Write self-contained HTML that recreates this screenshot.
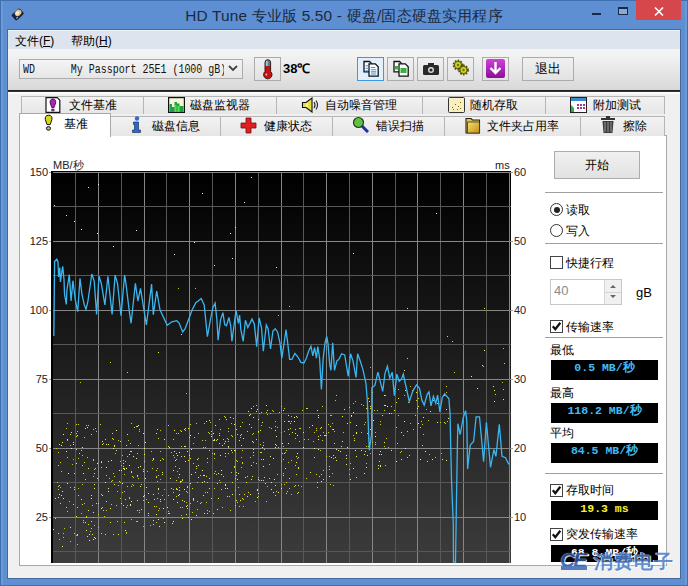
<!DOCTYPE html>
<html><head><meta charset="utf-8">
<style>
*{box-sizing:border-box;margin:0;padding:0}
html,body{width:688px;height:586px;overflow:hidden}
body{position:relative;background:#5b8dd0;font-family:"Liberation Sans",sans-serif;font-size:12px;color:#000}
.a{position:absolute}
#frame{left:0;top:0;width:688px;height:586px;border:1px solid #3f6fae;background:#5d8fd2}
#title{left:0;top:6px;width:688px;text-align:center;font-size:15.4px;letter-spacing:0.18px;color:#1b2a3e;line-height:20px;padding-left:0}
#client{left:8px;top:30px;width:672px;height:548px;background:#f0f0f0}
#menu{left:8px;top:30px;width:672px;height:19px;background:#dde4ed;border-top:1px solid #eef5fc}
#menu span{position:absolute;top:3px;font-size:12px;line-height:14px}
#toolbar{left:8px;top:49px;width:672px;height:41px;background:linear-gradient(#f4f4f5,#eeeeee 30%,#d8d8d8)}
#tbline{left:8px;top:90px;width:672px;height:2px;background:linear-gradient(#1a1a1a,#3a3a3a)}
.btn{position:absolute;border:1px solid #acacac;background:linear-gradient(#f0f0f0,#e2e2e2)}
.tab{position:absolute;border:1px solid #b5b5b5;border-bottom:none;background:linear-gradient(#f2f2f2,#e6e6e6);font-size:12px;line-height:16px}
.tab .t{position:absolute;top:1px}
#panel{left:19px;top:135px;width:648px;height:431px;background:#fff;border:1px solid #a8a8a8}
.lbl{position:absolute;font-size:12px;line-height:14px}
.ax{position:absolute;font-size:11px;line-height:12px;color:#222}
.sep{position:absolute;height:1px;background:#a0a0a0}
.val{position:absolute;left:551px;width:107px;height:20px;background:#000;font-family:"Liberation Mono",monospace;font-weight:bold;font-size:11.5px;line-height:15px;text-align:center;color:#40bcf6}
.cb{position:absolute;left:550px;width:13px;height:13px;border:1px solid #444;background:#fff}
</style></head><body>
<div id="frame" class="a"></div>
<div id="title" class="a">HD Tune 专业版 5.50 - 硬盘/固态硬盘实用程序</div>
<div class="a" style="left:1px;top:1px;width:2px;height:584px;background:#6a9ad8"></div>
<div class="a" style="left:685px;top:1px;width:2px;height:584px;background:#6a9ad8"></div>
<div class="a" style="left:7px;top:29px;width:674px;height:550px;background:#46699a"></div>
<div id="client" class="a"></div>
<div id="menu" class="a"><span style="left:7px">文件(<u>F</u>)</span><span style="left:63px">帮助(<u>H</u>)</span></div>
<div id="toolbar" class="a"></div>
<div id="tbline" class="a"></div>
<div class="a" style="left:8px;top:92px;width:672px;height:2px;background:#fbfbfb"></div>

<div id="panel" class="a"></div>
<!-- tabs row 1 -->
<div class="tab" style="left:21px;top:96px;width:123px;height:18px"></div>
<div class="tab" style="left:143px;top:96px;width:134px;height:18px"></div>
<div class="tab" style="left:276px;top:96px;width:147px;height:18px"></div>
<div class="tab" style="left:422px;top:96px;width:124px;height:18px"></div>
<div class="tab" style="left:545px;top:96px;width:120px;height:18px"></div>
<!-- tabs row 2 -->
<div class="tab" style="left:110px;top:116px;width:111px;height:20px"></div>
<div class="tab" style="left:220px;top:116px;width:113px;height:20px"></div>
<div class="tab" style="left:332px;top:116px;width:113px;height:20px"></div>
<div class="tab" style="left:444px;top:116px;width:137px;height:20px"></div>
<div class="tab" style="left:580px;top:116px;width:85px;height:20px"></div>
<div class="a" style="left:19px;top:113px;width:92px;height:24px;background:#fff;border:1px solid #a8a8a8;border-bottom:none"></div>
<!-- tab labels row1 -->
<div class="lbl" style="left:69px;top:98px">文件基准</div>
<div class="lbl" style="left:190px;top:98px">磁盘监视器</div>
<div class="lbl" style="left:325px;top:98px">自动噪音管理</div>
<div class="lbl" style="left:470px;top:98px">随机存取</div>
<div class="lbl" style="left:593px;top:98px">附加测试</div>
<div class="lbl" style="left:64px;top:117px">基准</div>
<div class="lbl" style="left:152px;top:119px">磁盘信息</div>
<div class="lbl" style="left:264px;top:119px">健康状态</div>
<div class="lbl" style="left:376px;top:119px">错误扫描</div>
<div class="lbl" style="left:487px;top:119px">文件夹占用率</div>
<div class="lbl" style="left:623px;top:119px">擦除</div>
<!-- tab icons -->
<svg class="a" style="left:45px;top:97px" width="16" height="16" viewBox="0 0 16 16"><path d="M1 0.6h11.2l2.6 2.6v12.2H1z" fill="#fff" stroke="#111" stroke-width="1.2"/><path d="M7.9 2C10.4 2 11 4 10.6 6L9 10.6H6.8L5.2 6C4.8 4 5.4 2 7.9 2z" fill="#b020c0" stroke="#301030" stroke-width="0.9"/><ellipse cx="7.9" cy="13" rx="1.5" ry="1" fill="#a030b0" stroke="#301030" stroke-width="0.7"/></svg>
<svg class="a" style="left:168px;top:97px" width="17" height="16" viewBox="0 0 17 16"><rect x="0.6" y="0.6" width="15.8" height="14.8" fill="#f4f8d8" stroke="#111" stroke-width="1.2"/><g fill="#20a040"><rect x="1.5" y="7" width="2.5" height="8"/><rect x="4" y="10" width="2.5" height="5"/><rect x="6.5" y="5" width="2.5" height="10"/><rect x="9" y="6.5" width="2.5" height="8.5"/><rect x="11.5" y="9" width="4" height="6"/></g><g fill="#50e050"><rect x="7" y="8" width="1.5" height="7"/><rect x="9.5" y="9" width="1.5" height="6"/></g></svg>
<svg class="a" style="left:301px;top:97px" width="19" height="16" viewBox="0 0 19 16"><path d="M1.5 5.5h3.5l6-4.5v14l-6-4.5H1.5z" fill="#e8e040" stroke="#111" stroke-width="1.1"/><path d="M6 6v4" stroke="#fff" stroke-width="1"/><path d="M13 5q2 3 0 6M15 3.5q3 4.5 0 9" stroke="#222" stroke-width="1.1" fill="none"/></svg>
<svg class="a" style="left:448px;top:97px" width="17" height="16" viewBox="0 0 17 16"><rect x="0.5" y="0.5" width="16" height="15" rx="1" fill="#f8eec0" stroke="#333"/><g fill="#806020"><rect x="4" y="10" width="1" height="1"/><rect x="7" y="7" width="1" height="1"/><rect x="10" y="9" width="1" height="1"/><rect x="12" y="5" width="1" height="1"/><rect x="5" y="12" width="1" height="1"/><rect x="9" y="12" width="1" height="1"/><rect x="12" y="11" width="1" height="1"/></g></svg>
<svg class="a" style="left:570px;top:97px" width="17" height="16" viewBox="0 0 17 16"><rect x="0.5" y="0.5" width="16" height="15" fill="#fff" stroke="#222"/><rect x="1" y="1" width="15" height="3" fill="#3a8ad0"/><path d="M1 15V8l3 3v4z" fill="#2ab040"/><g fill="#b03090"><rect x="7" y="7" width="2" height="2"/><rect x="10" y="7" width="2" height="2"/><rect x="7" y="10" width="2" height="2"/><rect x="10" y="10" width="2" height="2"/><rect x="13" y="10" width="2" height="2"/><rect x="13" y="7" width="2" height="2"/></g></svg>
<svg class="a" style="left:43px;top:114px" width="11" height="17" viewBox="0 0 11 17"><path d="M5.6 1.2C8.4 1.2 9.3 3.2 8.9 5.4L7.2 10.6H4L2.3 5.4C1.9 3.2 2.8 1.2 5.6 1.2z" fill="#d8d818" stroke="#111" stroke-width="1"/><ellipse cx="5.5" cy="14.4" rx="2.1" ry="1.8" fill="#b8c070" stroke="#111" stroke-width="1"/></svg>
<svg class="a" style="left:131px;top:116px" width="11" height="17" viewBox="0 0 11 17"><circle cx="6" cy="2.5" r="2.2" fill="#2a6ad8"/><path d="M2.5 6h5v8h2v2.5h-8V14h2v-5.5h-1z" fill="#2a6ad8" stroke="#123" stroke-width="0.6"/></svg>
<svg class="a" style="left:240px;top:117px" width="17" height="17" viewBox="0 0 17 17"><path d="M6 1h5v5h5v5h-5v5H6v-5H1V6h5z" fill="#e02020" stroke="#701010" stroke-width="0.8"/></svg>
<svg class="a" style="left:352px;top:116px" width="17" height="17" viewBox="0 0 17 17"><circle cx="6.5" cy="6.5" r="5" fill="#60c040" stroke="#204010" stroke-width="1.2"/><path d="M10 10l6 6" stroke="#2030a0" stroke-width="3"/></svg>
<svg class="a" style="left:465px;top:116px" width="16" height="18" viewBox="0 0 16 18"><defs><linearGradient id="fg" x1="0" y1="0" x2="1" y2="1"><stop offset="0" stop-color="#f8e070"/><stop offset="1" stop-color="#c09010"/></linearGradient></defs><path d="M1 2.5h5l1.5 1.5H14.5v13H1z" fill="#e0c040" stroke="#222" stroke-width="1.1"/><path d="M2.5 6h12v11h-12z" fill="url(#fg)" stroke="#333" stroke-width="0.8"/></svg>
<svg class="a" style="left:600px;top:116px" width="16" height="18" viewBox="0 0 16 18"><rect x="1" y="2" width="14" height="2" fill="#333"/><rect x="6" y="0" width="4" height="2" fill="#333"/><path d="M2.5 5h11l-1 12h-9z" fill="#3a3a3a"/><path d="M5 6v10M8 6v10M11 6v10" stroke="#999" stroke-width="1"/></svg>

<!-- title icon -->
<svg class="a" style="left:9px;top:6px" width="18" height="18" viewBox="0 0 18 18"><g transform="rotate(-42 8.7 8.4)"><rect x="3.2" y="4.6" width="11" height="7.6" rx="1.5" fill="#15243c"/><ellipse cx="10" cy="7.6" rx="3.6" ry="2.8" fill="#e8c48a"/><ellipse cx="9.4" cy="7.2" rx="1.8" ry="1.3" fill="#fff0d4"/><ellipse cx="6" cy="10.5" rx="1.2" ry="0.8" fill="#a0a8b0"/></g></svg>
<!-- min max close -->
<div class="a" style="left:592px;top:13px;width:9px;height:2px;background:#1b2a44"></div>
<div class="a" style="left:618px;top:7px;width:10px;height:8px;border:1px solid #1b2a44;border-top-width:2px;background:#8aaad4"></div>
<div class="a" style="left:636px;top:0;width:45px;height:20px;background:#d6474b"></div>
<svg class="a" style="left:654px;top:7px" width="10" height="9" viewBox="0 0 10 9"><path d="M1 0.5L9 8.5M9 0.5L1 8.5" stroke="#fff" stroke-width="1.6"/></svg>
<!-- combobox -->
<div class="a" style="left:19px;top:59px;width:224px;height:20px;border:1px solid #acacac;background:linear-gradient(#f4f4f4,#e6e6e6)"></div>
<div class="a" style="left:23px;top:63px;font-family:'Liberation Mono',monospace;font-size:12px;line-height:14px;white-space:pre;color:#111;transform:scaleX(0.83);transform-origin:0 0">WD      My Passport 25E1 (1000 gB)</div>
<div class="a" style="left:224px;top:60px;width:18px;height:18px;background:linear-gradient(#f4f4f4,#e6e6e6)"></div>
<svg class="a" style="left:228px;top:65px" width="10" height="7" viewBox="0 0 10 7"><path d="M1 1L5 5L9 1" stroke="#444" stroke-width="1.8" fill="none"/></svg>
<!-- thermometer button -->
<div class="btn" style="left:254px;top:57px;width:27px;height:24px"></div>
<svg class="a" style="left:260px;top:58px" width="14" height="22" viewBox="0 0 14 22"><path d="M5 4.5a2.8 2.8 0 0 1 5.6 0V13.5a4.2 4.2 0 1 1-5.6 0z" fill="#c81010" stroke="#201010" stroke-width="0.9"/><path d="M5.5 4.5a2.3 2.3 0 0 1 4.6 0V8H5.5z" fill="#3a8a98"/><rect x="6.3" y="3" width="1.2" height="5" fill="#b8f0f0"/><ellipse cx="6.3" cy="16.5" rx="1" ry="0.9" fill="#ffb0b0"/></svg>
<div class="a" style="left:283px;top:62px;font-weight:bold;font-size:13px;line-height:14px">38℃</div>
<!-- toolbar icon buttons -->
<div class="btn" style="left:357px;top:57px;width:27px;height:24px;border-color:#3c9ae4;background:#e2f0fb"></div>
<div class="btn" style="left:387px;top:57px;width:27px;height:24px"></div>
<div class="btn" style="left:417px;top:57px;width:27px;height:24px"></div>
<div class="btn" style="left:447px;top:57px;width:27px;height:24px"></div>
<div class="btn" style="left:482px;top:57px;width:27px;height:24px"></div>
<div class="btn" style="left:522px;top:57px;width:52px;height:24px"></div>
<div class="a" style="left:522px;top:62px;width:52px;text-align:center;font-size:13px;line-height:14px">退出</div>
<svg class="a" style="left:360px;top:58px" width="22" height="22" viewBox="0 0 22 22"><path d="M4 3.5h5.5l2.3 2.3v8h-7.8z" fill="#fff" stroke="#111" stroke-width="1.3"/><path d="M9 5.8h6.3l2.9 2.9v9.4h-9.2z" fill="#fff" stroke="#111" stroke-width="1.3"/><path d="M5.5 7.8h3.5M5.5 10.3h3.5M5.5 12.8h2.5M10.8 9.5h4.5M10.8 11.7h5.5M10.8 13.9h5.5M10.8 16h5.5" stroke="#3b8fe0" stroke-width="1.1"/></svg>
<svg class="a" style="left:390px;top:58px" width="22" height="22" viewBox="0 0 22 22"><path d="M4 3.5h5.5l2.3 2.3v8h-7.8z" fill="#fff" stroke="#111" stroke-width="1.3"/><path d="M9 5.8h6.3l2.9 2.9v9.4h-9.2z" fill="#fff" stroke="#111" stroke-width="1.3"/><rect x="5" y="8" width="3.5" height="3.5" fill="#3cb03c"/><rect x="10.5" y="10" width="6" height="5" fill="#3cb03c"/></svg>
<svg class="a" style="left:422px;top:62px" width="18" height="14" viewBox="0 0 18 14"><rect x="1" y="3" width="16" height="10" rx="1.5" fill="#2a2a2a"/><rect x="6" y="1" width="6" height="3" fill="#2a2a2a"/><circle cx="9" cy="8" r="3" fill="#ddd"/><circle cx="9" cy="8" r="1.6" fill="#2a2a2a"/></svg>
<svg class="a" style="left:451px;top:59px" width="20" height="17" viewBox="0 0 20 17"><g fill="#d0d020" stroke="#505010" stroke-width="0.9"><circle cx="7" cy="6" r="4.2" stroke-dasharray="1.6 1.1" stroke-width="2.4"/><circle cx="7" cy="6" r="3.6"/><circle cx="12.5" cy="11" r="4.2" stroke-dasharray="1.6 1.1" stroke-width="2.4"/><circle cx="12.5" cy="11" r="3.6"/></g><circle cx="7" cy="6" r="1.2" fill="#707010"/><circle cx="12.5" cy="11" r="1.2" fill="#707010"/></svg>
<svg class="a" style="left:486px;top:59px" width="19" height="19" viewBox="0 0 19 19"><defs><linearGradient id="pg" x1="0" y1="0" x2="0" y2="1"><stop offset="0" stop-color="#d040d8"/><stop offset="1" stop-color="#8a1098"/></linearGradient></defs><rect x="0" y="0" width="19" height="19" rx="2" fill="url(#pg)"/><path d="M9.5 3v10M4.5 9l5 5 5-5" stroke="#fff" stroke-width="2.4" fill="none"/></svg>
<svg width="460" height="392" viewBox="0 0 460 392" style="position:absolute;left:51px;top:171px;display:block">
<defs><linearGradient id="gbg" x1="0" y1="0" x2="0" y2="1"><stop offset="0" stop-color="#000"/><stop offset="1" stop-color="#3c3c3c"/></linearGradient></defs>
<rect width="460" height="392" fill="url(#gbg)"/>
<g stroke-width="1" shape-rendering="crispEdges"><line x1="1.50" y1="0" x2="1.50" y2="392" stroke="#868686"/><line x1="24.50" y1="0" x2="24.50" y2="392" stroke="#585858"/><line x1="47.50" y1="0" x2="47.50" y2="392" stroke="#868686"/><line x1="70.50" y1="0" x2="70.50" y2="392" stroke="#585858"/><line x1="93.50" y1="0" x2="93.50" y2="392" stroke="#868686"/><line x1="115.50" y1="0" x2="115.50" y2="392" stroke="#585858"/><line x1="138.50" y1="0" x2="138.50" y2="392" stroke="#868686"/><line x1="161.50" y1="0" x2="161.50" y2="392" stroke="#585858"/><line x1="184.50" y1="0" x2="184.50" y2="392" stroke="#868686"/><line x1="207.50" y1="0" x2="207.50" y2="392" stroke="#585858"/><line x1="230.50" y1="0" x2="230.50" y2="392" stroke="#868686"/><line x1="252.50" y1="0" x2="252.50" y2="392" stroke="#585858"/><line x1="275.50" y1="0" x2="275.50" y2="392" stroke="#868686"/><line x1="298.50" y1="0" x2="298.50" y2="392" stroke="#585858"/><line x1="321.50" y1="0" x2="321.50" y2="392" stroke="#868686"/><line x1="344.50" y1="0" x2="344.50" y2="392" stroke="#585858"/><line x1="366.50" y1="0" x2="366.50" y2="392" stroke="#868686"/><line x1="389.50" y1="0" x2="389.50" y2="392" stroke="#585858"/><line x1="412.50" y1="0" x2="412.50" y2="392" stroke="#868686"/><line x1="435.50" y1="0" x2="435.50" y2="392" stroke="#585858"/><line x1="458.50" y1="0" x2="458.50" y2="392" stroke="#868686"/><line x1="0" y1="1.50" x2="460" y2="1.50" stroke="#868686"/><line x1="0" y1="35.50" x2="460" y2="35.50" stroke="#585858"/><line x1="0" y1="70.50" x2="460" y2="70.50" stroke="#868686"/><line x1="0" y1="104.50" x2="460" y2="104.50" stroke="#585858"/><line x1="0" y1="139.50" x2="460" y2="139.50" stroke="#868686"/><line x1="0" y1="173.50" x2="460" y2="173.50" stroke="#585858"/><line x1="0" y1="208.50" x2="460" y2="208.50" stroke="#868686"/><line x1="0" y1="242.50" x2="460" y2="242.50" stroke="#585858"/><line x1="0" y1="277.50" x2="460" y2="277.50" stroke="#868686"/><line x1="0" y1="311.50" x2="460" y2="311.50" stroke="#585858"/><line x1="0" y1="346.50" x2="460" y2="346.50" stroke="#868686"/><line x1="0" y1="380.50" x2="460" y2="380.50" stroke="#585858"/></g>
<g><rect x="37" y="16" width="1" height="1" fill="#f0f0d0"/><rect x="47" y="13" width="1" height="1" fill="#f0f0d0"/><rect x="3" y="34" width="1" height="1" fill="#f0f0d0"/><rect x="15" y="44" width="1" height="1" fill="#f0f0d0"/><rect x="23" y="50" width="1" height="1" fill="#f0f0d0"/><rect x="30" y="58" width="1" height="1" fill="#f0f0d0"/><rect x="46" y="62" width="1" height="1" fill="#f0f0d0"/><rect x="62" y="75" width="1" height="1" fill="#f0f0d0"/><rect x="85" y="59" width="1" height="1" fill="#f0f0d0"/><rect x="123" y="83" width="1" height="1" fill="#f0f0d0"/><rect x="143" y="71" width="1" height="1" fill="#f0f0d0"/><rect x="151" y="22" width="1" height="1" fill="#f0f0d0"/><rect x="200" y="6" width="1" height="1" fill="#f0f0d0"/><rect x="193" y="31" width="1" height="1" fill="#f0f0d0"/><rect x="184" y="56" width="1" height="1" fill="#f0f0d0"/><rect x="179" y="62" width="1" height="1" fill="#f0f0d0"/><rect x="181" y="87" width="1" height="1" fill="#f0f0d0"/><rect x="385" y="42" width="1" height="1" fill="#f0f0d0"/><rect x="302" y="82" width="1" height="1" fill="#f0f0d0"/><rect x="153" y="304" width="1" height="1" fill="#f0f070"/><rect x="310" y="261" width="1" height="1" fill="#c8c810"/><rect x="198" y="253" width="1" height="1" fill="#f0f030"/><rect x="172" y="305" width="1" height="1" fill="#d0d000"/><rect x="266" y="239" width="1" height="1" fill="#f0f030"/><rect x="32" y="349" width="1" height="1" fill="#c8c810"/><rect x="233" y="237" width="1" height="1" fill="#d0d000"/><rect x="329" y="294" width="1" height="1" fill="#f0f030"/><rect x="207" y="248" width="1" height="1" fill="#f0f070"/><rect x="7" y="318" width="1" height="1" fill="#d0d000"/><rect x="22" y="273" width="1" height="1" fill="#f0f070"/><rect x="83" y="256" width="1" height="1" fill="#e0e010"/><rect x="156" y="291" width="1" height="1" fill="#d0d000"/><rect x="283" y="272" width="1" height="1" fill="#e0e010"/><rect x="168" y="309" width="1" height="1" fill="#d0d000"/><rect x="154" y="276" width="1" height="1" fill="#d0d000"/><rect x="334" y="294" width="1" height="1" fill="#c8c810"/><rect x="238" y="263" width="1" height="1" fill="#c8c810"/><rect x="78" y="283" width="1" height="1" fill="#f0f070"/><rect x="25" y="345" width="1" height="1" fill="#f0f030"/><rect x="135" y="335" width="1" height="1" fill="#f0f070"/><rect x="131" y="347" width="1" height="1" fill="#f0f030"/><rect x="305" y="262" width="1" height="1" fill="#f0f070"/><rect x="134" y="259" width="1" height="1" fill="#e0e010"/><rect x="212" y="309" width="1" height="1" fill="#e0e010"/><rect x="92" y="262" width="1" height="1" fill="#f0f070"/><rect x="113" y="351" width="1" height="1" fill="#f0f070"/><rect x="36" y="256" width="1" height="1" fill="#f0f070"/><rect x="267" y="246" width="1" height="1" fill="#f0f070"/><rect x="151" y="269" width="1" height="1" fill="#c8c810"/><rect x="246" y="246" width="1" height="1" fill="#c8c810"/><rect x="216" y="243" width="1" height="1" fill="#d0d000"/><rect x="142" y="272" width="1" height="1" fill="#c8c810"/><rect x="92" y="355" width="1" height="1" fill="#c8c810"/><rect x="270" y="256" width="1" height="1" fill="#f0f070"/><rect x="72" y="295" width="1" height="1" fill="#e0e010"/><rect x="26" y="260" width="1" height="1" fill="#c8c810"/><rect x="196" y="260" width="1" height="1" fill="#e0e010"/><rect x="202" y="271" width="1" height="1" fill="#f0f030"/><rect x="153" y="342" width="1" height="1" fill="#f0f030"/><rect x="163" y="302" width="1" height="1" fill="#e0e010"/><rect x="65" y="334" width="1" height="1" fill="#c8c810"/><rect x="315" y="237" width="1" height="1" fill="#f0f030"/><rect x="296" y="276" width="1" height="1" fill="#f0f030"/><rect x="37" y="254" width="1" height="1" fill="#c8c810"/><rect x="323" y="239" width="1" height="1" fill="#d0d000"/><rect x="88" y="341" width="1" height="1" fill="#c8c810"/><rect x="201" y="263" width="1" height="1" fill="#d0d000"/><rect x="60" y="333" width="1" height="1" fill="#d0d000"/><rect x="25" y="278" width="1" height="1" fill="#e0e010"/><rect x="188" y="323" width="1" height="1" fill="#e0e010"/><rect x="207" y="260" width="1" height="1" fill="#f0f070"/><rect x="92" y="300" width="1" height="1" fill="#e0e010"/><rect x="22" y="271" width="1" height="1" fill="#f0f070"/><rect x="125" y="309" width="1" height="1" fill="#e0e010"/><rect x="46" y="292" width="1" height="1" fill="#f0f070"/><rect x="299" y="308" width="1" height="1" fill="#f0f030"/><rect x="232" y="288" width="1" height="1" fill="#d0d000"/><rect x="49" y="253" width="1" height="1" fill="#e0e010"/><rect x="8" y="368" width="1" height="1" fill="#c8c810"/><rect x="235" y="322" width="1" height="1" fill="#e0e010"/><rect x="9" y="332" width="1" height="1" fill="#e0e010"/><rect x="163" y="317" width="1" height="1" fill="#d0d000"/><rect x="108" y="355" width="1" height="1" fill="#f0f070"/><rect x="27" y="317" width="1" height="1" fill="#c8c810"/><rect x="247" y="314" width="1" height="1" fill="#f0f070"/><rect x="247" y="296" width="1" height="1" fill="#f0f030"/><rect x="266" y="311" width="1" height="1" fill="#f0f070"/><rect x="230" y="317" width="1" height="1" fill="#f0f070"/><rect x="292" y="261" width="1" height="1" fill="#c8c810"/><rect x="290" y="275" width="1" height="1" fill="#f0f030"/><rect x="129" y="310" width="1" height="1" fill="#f0f070"/><rect x="205" y="240" width="1" height="1" fill="#f0f030"/><rect x="215" y="330" width="1" height="1" fill="#c8c810"/><rect x="295" y="287" width="1" height="1" fill="#f0f070"/><rect x="247" y="286" width="1" height="1" fill="#e0e010"/><rect x="149" y="332" width="1" height="1" fill="#e0e010"/><rect x="30" y="342" width="1" height="1" fill="#c8c810"/><rect x="12" y="327" width="1" height="1" fill="#f0f030"/><rect x="162" y="269" width="1" height="1" fill="#f0f030"/><rect x="235" y="279" width="1" height="1" fill="#e0e010"/><rect x="207" y="325" width="1" height="1" fill="#c8c810"/><rect x="87" y="254" width="1" height="1" fill="#f0f070"/><rect x="102" y="323" width="1" height="1" fill="#f0f070"/><rect x="69" y="270" width="1" height="1" fill="#e0e010"/><rect x="304" y="279" width="1" height="1" fill="#f0f070"/><rect x="299" y="251" width="1" height="1" fill="#e0e010"/><rect x="68" y="299" width="1" height="1" fill="#f0f070"/><rect x="270" y="310" width="1" height="1" fill="#f0f070"/><rect x="130" y="310" width="1" height="1" fill="#c8c810"/><rect x="107" y="267" width="1" height="1" fill="#e0e010"/><rect x="167" y="327" width="1" height="1" fill="#f0f030"/><rect x="285" y="289" width="1" height="1" fill="#f0f030"/><rect x="94" y="271" width="1" height="1" fill="#f0f070"/><rect x="152" y="276" width="1" height="1" fill="#c8c810"/><rect x="73" y="297" width="1" height="1" fill="#d0d000"/><rect x="210" y="281" width="1" height="1" fill="#e0e010"/><rect x="107" y="339" width="1" height="1" fill="#d0d000"/><rect x="12" y="362" width="1" height="1" fill="#d0d000"/><rect x="16" y="340" width="1" height="1" fill="#e0e010"/><rect x="192" y="267" width="1" height="1" fill="#f0f030"/><rect x="153" y="252" width="1" height="1" fill="#c8c810"/><rect x="18" y="330" width="1" height="1" fill="#c8c810"/><rect x="151" y="311" width="1" height="1" fill="#f0f070"/><rect x="220" y="311" width="1" height="1" fill="#f0f070"/><rect x="160" y="265" width="1" height="1" fill="#f0f030"/><rect x="6" y="311" width="1" height="1" fill="#d0d000"/><rect x="240" y="250" width="1" height="1" fill="#e0e010"/><rect x="93" y="290" width="1" height="1" fill="#e0e010"/><rect x="234" y="281" width="1" height="1" fill="#d0d000"/><rect x="207" y="308" width="1" height="1" fill="#f0f070"/><rect x="133" y="330" width="1" height="1" fill="#f0f030"/><rect x="304" y="230" width="1" height="1" fill="#d0d000"/><rect x="243" y="246" width="1" height="1" fill="#f0f070"/><rect x="153" y="310" width="1" height="1" fill="#f0f030"/><rect x="305" y="254" width="1" height="1" fill="#f0f070"/><rect x="295" y="293" width="1" height="1" fill="#f0f070"/><rect x="156" y="311" width="1" height="1" fill="#d0d000"/><rect x="70" y="332" width="1" height="1" fill="#f0f030"/><rect x="275" y="285" width="1" height="1" fill="#c8c810"/><rect x="73" y="351" width="1" height="1" fill="#e0e010"/><rect x="329" y="295" width="1" height="1" fill="#f0f070"/><rect x="265" y="259" width="1" height="1" fill="#d0d000"/><rect x="149" y="304" width="1" height="1" fill="#c8c810"/><rect x="271" y="235" width="1" height="1" fill="#e0e010"/><rect x="60" y="289" width="1" height="1" fill="#f0f070"/><rect x="174" y="314" width="1" height="1" fill="#f0f070"/><rect x="282" y="287" width="1" height="1" fill="#c8c810"/><rect x="166" y="338" width="1" height="1" fill="#f0f070"/><rect x="31" y="276" width="1" height="1" fill="#f0f070"/><rect x="177" y="270" width="1" height="1" fill="#c8c810"/><rect x="245" y="291" width="1" height="1" fill="#f0f070"/><rect x="176" y="325" width="1" height="1" fill="#e0e010"/><rect x="188" y="269" width="1" height="1" fill="#f0f030"/><rect x="129" y="336" width="1" height="1" fill="#d0d000"/><rect x="302" y="241" width="1" height="1" fill="#f0f030"/><rect x="324" y="261" width="1" height="1" fill="#c8c810"/><rect x="69" y="311" width="1" height="1" fill="#c8c810"/><rect x="170" y="303" width="1" height="1" fill="#f0f070"/><rect x="11" y="375" width="1" height="1" fill="#f0f070"/><rect x="174" y="282" width="1" height="1" fill="#f0f030"/><rect x="269" y="279" width="1" height="1" fill="#d0d000"/><rect x="232" y="239" width="1" height="1" fill="#f0f030"/><rect x="181" y="281" width="1" height="1" fill="#c8c810"/><rect x="160" y="260" width="1" height="1" fill="#e0e010"/><rect x="146" y="330" width="1" height="1" fill="#c8c810"/><rect x="302" y="264" width="1" height="1" fill="#c8c810"/><rect x="66" y="320" width="1" height="1" fill="#d0d000"/><rect x="310" y="233" width="1" height="1" fill="#c8c810"/><rect x="10" y="274" width="1" height="1" fill="#f0f070"/><rect x="78" y="327" width="1" height="1" fill="#e0e010"/><rect x="109" y="289" width="1" height="1" fill="#f0f070"/><rect x="208" y="242" width="1" height="1" fill="#d0d000"/><rect x="245" y="245" width="1" height="1" fill="#f0f070"/><rect x="172" y="268" width="1" height="1" fill="#d0d000"/><rect x="68" y="310" width="1" height="1" fill="#e0e010"/><rect x="147" y="287" width="1" height="1" fill="#c8c810"/><rect x="140" y="303" width="1" height="1" fill="#f0f070"/><rect x="55" y="273" width="1" height="1" fill="#f0f030"/><rect x="212" y="295" width="1" height="1" fill="#f0f070"/><rect x="178" y="325" width="1" height="1" fill="#d0d000"/><rect x="206" y="318" width="1" height="1" fill="#f0f030"/><rect x="79" y="333" width="1" height="1" fill="#f0f070"/><rect x="272" y="308" width="1" height="1" fill="#e0e010"/><rect x="107" y="348" width="1" height="1" fill="#f0f070"/><rect x="75" y="362" width="1" height="1" fill="#c8c810"/><rect x="244" y="258" width="1" height="1" fill="#e0e010"/><rect x="34" y="351" width="1" height="1" fill="#f0f030"/><rect x="142" y="328" width="1" height="1" fill="#f0f070"/><rect x="44" y="297" width="1" height="1" fill="#e0e010"/><rect x="230" y="235" width="1" height="1" fill="#c8c810"/><rect x="69" y="327" width="1" height="1" fill="#d0d000"/><rect x="170" y="318" width="1" height="1" fill="#d0d000"/><rect x="169" y="311" width="1" height="1" fill="#c8c810"/><rect x="65" y="259" width="1" height="1" fill="#f0f070"/><rect x="37" y="254" width="1" height="1" fill="#d0d000"/><rect x="186" y="290" width="1" height="1" fill="#d0d000"/><rect x="191" y="251" width="1" height="1" fill="#c8c810"/><rect x="63" y="274" width="1" height="1" fill="#f0f070"/><rect x="282" y="314" width="1" height="1" fill="#c8c810"/><rect x="34" y="257" width="1" height="1" fill="#f0f030"/><rect x="319" y="258" width="1" height="1" fill="#e0e010"/><rect x="111" y="301" width="1" height="1" fill="#f0f030"/><rect x="174" y="285" width="1" height="1" fill="#c8c810"/><rect x="202" y="235" width="1" height="1" fill="#d0d000"/><rect x="235" y="311" width="1" height="1" fill="#c8c810"/><rect x="62" y="302" width="1" height="1" fill="#e0e010"/><rect x="248" y="270" width="1" height="1" fill="#d0d000"/><rect x="67" y="269" width="1" height="1" fill="#c8c810"/><rect x="173" y="245" width="1" height="1" fill="#d0d000"/><rect x="299" y="292" width="1" height="1" fill="#c8c810"/><rect x="289" y="280" width="1" height="1" fill="#f0f070"/><rect x="202" y="284" width="1" height="1" fill="#d0d000"/><rect x="305" y="285" width="1" height="1" fill="#f0f030"/><rect x="273" y="264" width="1" height="1" fill="#f0f070"/><rect x="295" y="284" width="1" height="1" fill="#f0f070"/><rect x="257" y="268" width="1" height="1" fill="#d0d000"/><rect x="25" y="292" width="1" height="1" fill="#f0f070"/><rect x="158" y="249" width="1" height="1" fill="#f0f030"/><rect x="120" y="317" width="1" height="1" fill="#e0e010"/><rect x="210" y="254" width="1" height="1" fill="#c8c810"/><rect x="317" y="275" width="1" height="1" fill="#e0e010"/><rect x="222" y="287" width="1" height="1" fill="#f0f070"/><rect x="180" y="279" width="1" height="1" fill="#f0f070"/><rect x="335" y="267" width="1" height="1" fill="#c8c810"/><rect x="207" y="306" width="1" height="1" fill="#c8c810"/><rect x="87" y="296" width="1" height="1" fill="#f0f070"/><rect x="19" y="274" width="1" height="1" fill="#c8c810"/><rect x="127" y="262" width="1" height="1" fill="#e0e010"/><rect x="86" y="350" width="1" height="1" fill="#d0d000"/><rect x="185" y="289" width="1" height="1" fill="#d0d000"/><rect x="324" y="265" width="1" height="1" fill="#f0f070"/><rect x="214" y="312" width="1" height="1" fill="#e0e010"/><rect x="27" y="324" width="1" height="1" fill="#e0e010"/><rect x="255" y="237" width="1" height="1" fill="#e0e010"/><rect x="55" y="304" width="1" height="1" fill="#d0d000"/><rect x="58" y="307" width="1" height="1" fill="#c8c810"/><rect x="206" y="238" width="1" height="1" fill="#f0f030"/><rect x="317" y="255" width="1" height="1" fill="#d0d000"/><rect x="201" y="270" width="1" height="1" fill="#f0f030"/><rect x="97" y="322" width="1" height="1" fill="#f0f070"/><rect x="189" y="266" width="1" height="1" fill="#d0d000"/><rect x="241" y="261" width="1" height="1" fill="#f0f030"/><rect x="7" y="281" width="1" height="1" fill="#d0d000"/><rect x="16" y="269" width="1" height="1" fill="#c8c810"/><rect x="253" y="268" width="1" height="1" fill="#c8c810"/><rect x="251" y="239" width="1" height="1" fill="#c8c810"/><rect x="317" y="227" width="1" height="1" fill="#e0e010"/><rect x="145" y="297" width="1" height="1" fill="#c8c810"/><rect x="326" y="239" width="1" height="1" fill="#d0d000"/><rect x="314" y="280" width="1" height="1" fill="#f0f070"/><rect x="328" y="283" width="1" height="1" fill="#f0f070"/><rect x="40" y="324" width="1" height="1" fill="#f0f030"/><rect x="154" y="269" width="1" height="1" fill="#d0d000"/><rect x="19" y="316" width="1" height="1" fill="#c8c810"/><rect x="43" y="302" width="1" height="1" fill="#f0f030"/><rect x="224" y="276" width="1" height="1" fill="#f0f030"/><rect x="89" y="315" width="1" height="1" fill="#f0f030"/><rect x="142" y="327" width="1" height="1" fill="#e0e010"/><rect x="179" y="339" width="1" height="1" fill="#e0e010"/><rect x="40" y="357" width="1" height="1" fill="#e0e010"/><rect x="263" y="286" width="1" height="1" fill="#e0e010"/><rect x="92" y="325" width="1" height="1" fill="#f0f030"/><rect x="190" y="296" width="1" height="1" fill="#d0d000"/><rect x="213" y="306" width="1" height="1" fill="#e0e010"/><rect x="65" y="279" width="1" height="1" fill="#f0f070"/><rect x="328" y="290" width="1" height="1" fill="#e0e010"/><rect x="15" y="257" width="1" height="1" fill="#c8c810"/><rect x="92" y="298" width="1" height="1" fill="#e0e010"/><rect x="210" y="241" width="1" height="1" fill="#d0d000"/><rect x="182" y="247" width="1" height="1" fill="#d0d000"/><rect x="31" y="333" width="1" height="1" fill="#f0f030"/><rect x="185" y="301" width="1" height="1" fill="#c8c810"/><rect x="126" y="300" width="1" height="1" fill="#d0d000"/><rect x="72" y="289" width="1" height="1" fill="#d0d000"/><rect x="42" y="346" width="1" height="1" fill="#d0d000"/><rect x="210" y="309" width="1" height="1" fill="#f0f030"/><rect x="73" y="298" width="1" height="1" fill="#f0f070"/><rect x="88" y="339" width="1" height="1" fill="#d0d000"/><rect x="125" y="317" width="1" height="1" fill="#e0e010"/><rect x="331" y="244" width="1" height="1" fill="#f0f070"/><rect x="250" y="315" width="1" height="1" fill="#c8c810"/><rect x="125" y="262" width="1" height="1" fill="#d0d000"/><rect x="190" y="286" width="1" height="1" fill="#c8c810"/><rect x="230" y="261" width="1" height="1" fill="#c8c810"/><rect x="222" y="240" width="1" height="1" fill="#d0d000"/><rect x="103" y="328" width="1" height="1" fill="#f0f030"/><rect x="233" y="260" width="1" height="1" fill="#c8c810"/><rect x="50" y="291" width="1" height="1" fill="#f0f030"/><rect x="244" y="267" width="1" height="1" fill="#c8c810"/><rect x="41" y="334" width="1" height="1" fill="#c8c810"/><rect x="192" y="328" width="1" height="1" fill="#d0d000"/><rect x="315" y="296" width="1" height="1" fill="#f0f030"/><rect x="269" y="257" width="1" height="1" fill="#d0d000"/><rect x="135" y="343" width="1" height="1" fill="#f0f070"/><rect x="300" y="244" width="1" height="1" fill="#f0f070"/><rect x="124" y="289" width="1" height="1" fill="#f0f030"/><rect x="134" y="290" width="1" height="1" fill="#f0f030"/><rect x="67" y="314" width="1" height="1" fill="#c8c810"/><rect x="267" y="278" width="1" height="1" fill="#f0f030"/><rect x="189" y="255" width="1" height="1" fill="#f0f070"/><rect x="9" y="316" width="1" height="1" fill="#d0d000"/><rect x="183" y="296" width="1" height="1" fill="#c8c810"/><rect x="324" y="271" width="1" height="1" fill="#d0d000"/><rect x="23" y="318" width="1" height="1" fill="#f0f030"/><rect x="247" y="314" width="1" height="1" fill="#d0d000"/><rect x="30" y="328" width="1" height="1" fill="#f0f030"/><rect x="50" y="337" width="1" height="1" fill="#f0f070"/><rect x="218" y="256" width="1" height="1" fill="#d0d000"/><rect x="75" y="336" width="1" height="1" fill="#e0e010"/><rect x="176" y="317" width="1" height="1" fill="#f0f030"/><rect x="133" y="285" width="1" height="1" fill="#f0f070"/><rect x="324" y="273" width="1" height="1" fill="#e0e010"/><rect x="181" y="311" width="1" height="1" fill="#e0e010"/><rect x="238" y="317" width="1" height="1" fill="#c8c810"/><rect x="139" y="332" width="1" height="1" fill="#c8c810"/><rect x="224" y="314" width="1" height="1" fill="#e0e010"/><rect x="270" y="303" width="1" height="1" fill="#e0e010"/><rect x="321" y="271" width="1" height="1" fill="#d0d000"/><rect x="238" y="307" width="1" height="1" fill="#e0e010"/><rect x="142" y="292" width="1" height="1" fill="#c8c810"/><rect x="51" y="336" width="1" height="1" fill="#d0d000"/><rect x="70" y="299" width="1" height="1" fill="#f0f070"/><rect x="99" y="354" width="1" height="1" fill="#c8c810"/><rect x="22" y="288" width="1" height="1" fill="#c8c810"/><rect x="40" y="327" width="1" height="1" fill="#f0f070"/><rect x="155" y="305" width="1" height="1" fill="#e0e010"/><rect x="63" y="275" width="1" height="1" fill="#e0e010"/><rect x="80" y="330" width="1" height="1" fill="#f0f070"/><rect x="200" y="256" width="1" height="1" fill="#e0e010"/><rect x="64" y="282" width="1" height="1" fill="#c8c810"/><rect x="59" y="337" width="1" height="1" fill="#f0f030"/><rect x="106" y="310" width="1" height="1" fill="#c8c810"/><rect x="298" y="303" width="1" height="1" fill="#d0d000"/><rect x="184" y="334" width="1" height="1" fill="#e0e010"/><rect x="163" y="268" width="1" height="1" fill="#f0f030"/><rect x="19" y="370" width="1" height="1" fill="#d0d000"/><rect x="269" y="264" width="1" height="1" fill="#e0e010"/><rect x="174" y="270" width="1" height="1" fill="#f0f070"/><rect x="6" y="311" width="1" height="1" fill="#d0d000"/><rect x="126" y="331" width="1" height="1" fill="#f0f030"/><rect x="240" y="289" width="1" height="1" fill="#c8c810"/><rect x="54" y="268" width="1" height="1" fill="#e0e010"/><rect x="109" y="280" width="1" height="1" fill="#d0d000"/><rect x="291" y="270" width="1" height="1" fill="#f0f030"/><rect x="333" y="239" width="1" height="1" fill="#d0d000"/><rect x="52" y="339" width="1" height="1" fill="#e0e010"/><rect x="2" y="358" width="1" height="1" fill="#f0f030"/><rect x="92" y="329" width="1" height="1" fill="#d0d000"/><rect x="34" y="308" width="1" height="1" fill="#d0d000"/><rect x="158" y="340" width="1" height="1" fill="#d0d000"/><rect x="197" y="321" width="1" height="1" fill="#e0e010"/><rect x="103" y="335" width="1" height="1" fill="#e0e010"/><rect x="141" y="341" width="1" height="1" fill="#d0d000"/><rect x="32" y="351" width="1" height="1" fill="#d0d000"/><rect x="71" y="312" width="1" height="1" fill="#f0f070"/><rect x="177" y="257" width="1" height="1" fill="#c8c810"/><rect x="279" y="255" width="1" height="1" fill="#f0f030"/><rect x="27" y="287" width="1" height="1" fill="#d0d000"/><rect x="158" y="317" width="1" height="1" fill="#f0f030"/><rect x="122" y="321" width="1" height="1" fill="#e0e010"/><rect x="37" y="297" width="1" height="1" fill="#f0f030"/><rect x="156" y="342" width="1" height="1" fill="#e0e010"/><rect x="128" y="323" width="1" height="1" fill="#f0f070"/><rect x="81" y="313" width="1" height="1" fill="#c8c810"/><rect x="155" y="250" width="1" height="1" fill="#f0f030"/><rect x="207" y="261" width="1" height="1" fill="#d0d000"/><rect x="127" y="306" width="1" height="1" fill="#c8c810"/><rect x="101" y="289" width="1" height="1" fill="#c8c810"/><rect x="133" y="318" width="1" height="1" fill="#f0f070"/><rect x="87" y="274" width="1" height="1" fill="#c8c810"/><rect x="246" y="264" width="1" height="1" fill="#f0f030"/><rect x="317" y="267" width="1" height="1" fill="#f0f070"/><rect x="112" y="337" width="1" height="1" fill="#f0f070"/><rect x="33" y="266" width="1" height="1" fill="#d0d000"/><rect x="33" y="332" width="1" height="1" fill="#c8c810"/><rect x="238" y="250" width="1" height="1" fill="#d0d000"/><rect x="136" y="334" width="1" height="1" fill="#f0f070"/><rect x="199" y="243" width="1" height="1" fill="#f0f070"/><rect x="77" y="269" width="1" height="1" fill="#c8c810"/><rect x="43" y="298" width="1" height="1" fill="#c8c810"/><rect x="26" y="364" width="1" height="1" fill="#c8c810"/><rect x="144" y="301" width="1" height="1" fill="#f0f030"/><rect x="218" y="307" width="1" height="1" fill="#d0d000"/><rect x="275" y="262" width="1" height="1" fill="#e0e010"/><rect x="139" y="253" width="1" height="1" fill="#d0d000"/><rect x="135" y="320" width="1" height="1" fill="#d0d000"/><rect x="329" y="280" width="1" height="1" fill="#f0f070"/><rect x="205" y="234" width="1" height="1" fill="#e0e010"/><rect x="112" y="288" width="1" height="1" fill="#e0e010"/><rect x="219" y="242" width="1" height="1" fill="#c8c810"/><rect x="128" y="303" width="1" height="1" fill="#f0f070"/><rect x="265" y="303" width="1" height="1" fill="#d0d000"/><rect x="55" y="339" width="1" height="1" fill="#c8c810"/><rect x="303" y="269" width="1" height="1" fill="#f0f030"/><rect x="169" y="258" width="1" height="1" fill="#d0d000"/><rect x="240" y="323" width="1" height="1" fill="#c8c810"/><rect x="174" y="313" width="1" height="1" fill="#f0f070"/><rect x="280" y="244" width="1" height="1" fill="#d0d000"/><rect x="211" y="251" width="1" height="1" fill="#f0f070"/><rect x="30" y="279" width="1" height="1" fill="#e0e010"/><rect x="194" y="306" width="1" height="1" fill="#f0f070"/><rect x="112" y="347" width="1" height="1" fill="#c8c810"/><rect x="122" y="299" width="1" height="1" fill="#c8c810"/><rect x="43" y="366" width="1" height="1" fill="#f0f030"/><rect x="47" y="356" width="1" height="1" fill="#c8c810"/><rect x="183" y="295" width="1" height="1" fill="#f0f030"/><rect x="189" y="264" width="1" height="1" fill="#e0e010"/><rect x="305" y="306" width="1" height="1" fill="#e0e010"/><rect x="202" y="246" width="1" height="1" fill="#f0f030"/><rect x="277" y="253" width="1" height="1" fill="#c8c810"/><rect x="82" y="314" width="1" height="1" fill="#d0d000"/><rect x="279" y="244" width="1" height="1" fill="#c8c810"/><rect x="27" y="253" width="1" height="1" fill="#f0f070"/><rect x="62" y="363" width="1" height="1" fill="#c8c810"/><rect x="315" y="275" width="1" height="1" fill="#c8c810"/><rect x="226" y="303" width="1" height="1" fill="#d0d000"/><rect x="129" y="311" width="1" height="1" fill="#e0e010"/><rect x="158" y="262" width="1" height="1" fill="#d0d000"/><rect x="131" y="308" width="1" height="1" fill="#c8c810"/><rect x="60" y="310" width="1" height="1" fill="#d0d000"/><rect x="90" y="313" width="1" height="1" fill="#e0e010"/><rect x="113" y="318" width="1" height="1" fill="#c8c810"/><rect x="15" y="336" width="1" height="1" fill="#e0e010"/><rect x="50" y="362" width="1" height="1" fill="#e0e010"/><rect x="202" y="281" width="1" height="1" fill="#f0f030"/><rect x="139" y="312" width="1" height="1" fill="#f0f070"/><rect x="232" y="304" width="1" height="1" fill="#e0e010"/><rect x="252" y="276" width="1" height="1" fill="#f0f070"/><rect x="281" y="302" width="1" height="1" fill="#c8c810"/><rect x="147" y="306" width="1" height="1" fill="#f0f070"/><rect x="303" y="267" width="1" height="1" fill="#c8c810"/><rect x="146" y="338" width="1" height="1" fill="#c8c810"/><rect x="109" y="259" width="1" height="1" fill="#c8c810"/><rect x="244" y="314" width="1" height="1" fill="#e0e010"/><rect x="246" y="287" width="1" height="1" fill="#c8c810"/><rect x="252" y="261" width="1" height="1" fill="#f0f030"/><rect x="25" y="265" width="1" height="1" fill="#e0e010"/><rect x="151" y="299" width="1" height="1" fill="#f0f070"/><rect x="134" y="257" width="1" height="1" fill="#f0f030"/><rect x="233" y="282" width="1" height="1" fill="#f0f070"/><rect x="82" y="285" width="1" height="1" fill="#f0f030"/><rect x="134" y="275" width="1" height="1" fill="#f0f070"/><rect x="25" y="364" width="1" height="1" fill="#c8c810"/><rect x="324" y="273" width="1" height="1" fill="#d0d000"/><rect x="142" y="329" width="1" height="1" fill="#c8c810"/><rect x="76" y="334" width="1" height="1" fill="#c8c810"/><rect x="191" y="327" width="1" height="1" fill="#e0e010"/><rect x="35" y="346" width="1" height="1" fill="#e0e010"/><rect x="43" y="313" width="1" height="1" fill="#f0f030"/><rect x="102" y="287" width="1" height="1" fill="#f0f030"/><rect x="23" y="362" width="1" height="1" fill="#c8c810"/><rect x="274" y="264" width="1" height="1" fill="#e0e010"/><rect x="197" y="240" width="1" height="1" fill="#f0f030"/><rect x="12" y="366" width="1" height="1" fill="#d0d000"/><rect x="105" y="305" width="1" height="1" fill="#d0d000"/><rect x="313" y="302" width="1" height="1" fill="#f0f030"/><rect x="71" y="284" width="1" height="1" fill="#c8c810"/><rect x="281" y="258" width="1" height="1" fill="#c8c810"/><rect x="59" y="351" width="1" height="1" fill="#e0e010"/><rect x="333" y="234" width="1" height="1" fill="#f0f030"/><rect x="66" y="350" width="1" height="1" fill="#d0d000"/><rect x="19" y="263" width="1" height="1" fill="#f0f030"/><rect x="244" y="262" width="1" height="1" fill="#f0f030"/><rect x="302" y="297" width="1" height="1" fill="#f0f030"/><rect x="47" y="332" width="1" height="1" fill="#e0e010"/><rect x="76" y="285" width="1" height="1" fill="#d0d000"/><rect x="239" y="252" width="1" height="1" fill="#e0e010"/><rect x="62" y="277" width="1" height="1" fill="#f0f030"/><rect x="223" y="308" width="1" height="1" fill="#f0f030"/><rect x="126" y="318" width="1" height="1" fill="#e0e010"/><rect x="102" y="349" width="1" height="1" fill="#f0f030"/><rect x="224" y="259" width="1" height="1" fill="#f0f070"/><rect x="215" y="241" width="1" height="1" fill="#d0d000"/><rect x="329" y="253" width="1" height="1" fill="#d0d000"/><rect x="179" y="246" width="1" height="1" fill="#f0f030"/><rect x="202" y="262" width="1" height="1" fill="#d0d000"/><rect x="86" y="339" width="1" height="1" fill="#e0e010"/><rect x="31" y="284" width="1" height="1" fill="#c8c810"/><rect x="185" y="258" width="1" height="1" fill="#e0e010"/><rect x="156" y="321" width="1" height="1" fill="#e0e010"/><rect x="130" y="344" width="1" height="1" fill="#c8c810"/><rect x="168" y="262" width="1" height="1" fill="#d0d000"/><rect x="187" y="302" width="1" height="1" fill="#f0f070"/><rect x="122" y="318" width="1" height="1" fill="#d0d000"/><rect x="263" y="277" width="1" height="1" fill="#f0f070"/><rect x="284" y="286" width="1" height="1" fill="#f0f030"/><rect x="319" y="235" width="1" height="1" fill="#f0f070"/><rect x="57" y="320" width="1" height="1" fill="#f0f070"/><rect x="80" y="300" width="1" height="1" fill="#e0e010"/><rect x="259" y="301" width="1" height="1" fill="#f0f030"/><rect x="81" y="305" width="1" height="1" fill="#c8c810"/><rect x="76" y="315" width="1" height="1" fill="#d0d000"/><rect x="168" y="248" width="1" height="1" fill="#d0d000"/><rect x="201" y="305" width="1" height="1" fill="#f0f030"/><rect x="193" y="323" width="1" height="1" fill="#e0e010"/><rect x="62" y="268" width="1" height="1" fill="#e0e010"/><rect x="8" y="314" width="1" height="1" fill="#d0d000"/><rect x="147" y="294" width="1" height="1" fill="#f0f030"/><rect x="90" y="338" width="1" height="1" fill="#f0f030"/><rect x="26" y="363" width="1" height="1" fill="#f0f070"/><rect x="191" y="291" width="1" height="1" fill="#d0d000"/><rect x="106" y="258" width="1" height="1" fill="#e0e010"/><rect x="107" y="317" width="1" height="1" fill="#f0f070"/><rect x="177" y="268" width="1" height="1" fill="#d0d000"/><rect x="198" y="244" width="1" height="1" fill="#f0f070"/><rect x="55" y="330" width="1" height="1" fill="#e0e010"/><rect x="139" y="287" width="1" height="1" fill="#e0e010"/><rect x="74" y="359" width="1" height="1" fill="#f0f070"/><rect x="16" y="312" width="1" height="1" fill="#f0f070"/><rect x="154" y="321" width="1" height="1" fill="#c8c810"/><rect x="15" y="280" width="1" height="1" fill="#f0f070"/><rect x="298" y="236" width="1" height="1" fill="#e0e010"/><rect x="101" y="297" width="1" height="1" fill="#c8c810"/><rect x="27" y="253" width="1" height="1" fill="#d0d000"/><rect x="334" y="277" width="1" height="1" fill="#e0e010"/><rect x="79" y="280" width="1" height="1" fill="#e0e010"/><rect x="186" y="263" width="1" height="1" fill="#e0e010"/><rect x="156" y="339" width="1" height="1" fill="#d0d000"/><rect x="123" y="286" width="1" height="1" fill="#c8c810"/><rect x="136" y="315" width="1" height="1" fill="#d0d000"/><rect x="21" y="293" width="1" height="1" fill="#c8c810"/><rect x="233" y="313" width="1" height="1" fill="#d0d000"/><rect x="199" y="323" width="1" height="1" fill="#f0f070"/><rect x="156" y="287" width="1" height="1" fill="#f0f030"/><rect x="283" y="260" width="1" height="1" fill="#c8c810"/><rect x="74" y="290" width="1" height="1" fill="#c8c810"/><rect x="63" y="313" width="1" height="1" fill="#f0f030"/><rect x="57" y="273" width="1" height="1" fill="#f0f030"/><rect x="73" y="303" width="1" height="1" fill="#c8c810"/><rect x="105" y="299" width="1" height="1" fill="#e0e010"/><rect x="333" y="271" width="1" height="1" fill="#f0f070"/><rect x="70" y="294" width="1" height="1" fill="#c8c810"/><rect x="26" y="336" width="1" height="1" fill="#f0f030"/><rect x="123" y="280" width="1" height="1" fill="#f0f070"/><rect x="8" y="273" width="1" height="1" fill="#f0f030"/><rect x="89" y="295" width="1" height="1" fill="#f0f070"/><rect x="122" y="268" width="1" height="1" fill="#e0e010"/><rect x="314" y="251" width="1" height="1" fill="#e0e010"/><rect x="243" y="315" width="1" height="1" fill="#c8c810"/><rect x="9" y="291" width="1" height="1" fill="#e0e010"/><rect x="130" y="260" width="1" height="1" fill="#f0f030"/><rect x="296" y="252" width="1" height="1" fill="#f0f030"/><rect x="175" y="248" width="1" height="1" fill="#f0f070"/><rect x="133" y="275" width="1" height="1" fill="#f0f070"/><rect x="16" y="268" width="1" height="1" fill="#f0f030"/><rect x="200" y="237" width="1" height="1" fill="#f0f070"/><rect x="106" y="297" width="1" height="1" fill="#c8c810"/><rect x="183" y="253" width="1" height="1" fill="#f0f070"/><rect x="237" y="258" width="1" height="1" fill="#f0f030"/><rect x="244" y="294" width="1" height="1" fill="#d0d000"/><rect x="51" y="273" width="1" height="1" fill="#e0e010"/><rect x="95" y="328" width="1" height="1" fill="#d0d000"/><rect x="137" y="289" width="1" height="1" fill="#e0e010"/><rect x="117" y="275" width="1" height="1" fill="#f0f030"/><rect x="16" y="252" width="1" height="1" fill="#d0d000"/><rect x="212" y="288" width="1" height="1" fill="#f0f030"/><rect x="225" y="320" width="1" height="1" fill="#c8c810"/><rect x="74" y="328" width="1" height="1" fill="#e0e010"/><rect x="224" y="324" width="1" height="1" fill="#e0e010"/><rect x="291" y="245" width="1" height="1" fill="#f0f030"/><rect x="32" y="302" width="1" height="1" fill="#f0f070"/><rect x="133" y="258" width="1" height="1" fill="#f0f030"/><rect x="130" y="285" width="1" height="1" fill="#e0e010"/><rect x="168" y="272" width="1" height="1" fill="#e0e010"/><rect x="55" y="296" width="1" height="1" fill="#f0f030"/><rect x="160" y="263" width="1" height="1" fill="#d0d000"/><rect x="224" y="255" width="1" height="1" fill="#c8c810"/><rect x="33" y="291" width="1" height="1" fill="#e0e010"/><rect x="143" y="266" width="1" height="1" fill="#c8c810"/><rect x="196" y="305" width="1" height="1" fill="#e0e010"/><rect x="186" y="308" width="1" height="1" fill="#f0f030"/><rect x="10" y="300" width="1" height="1" fill="#d0d000"/><rect x="123" y="259" width="1" height="1" fill="#f0f030"/><rect x="137" y="257" width="1" height="1" fill="#f0f030"/><rect x="167" y="302" width="1" height="1" fill="#f0f070"/><rect x="158" y="279" width="1" height="1" fill="#e0e010"/><rect x="86" y="255" width="1" height="1" fill="#f0f070"/><rect x="118" y="342" width="1" height="1" fill="#f0f030"/><rect x="190" y="263" width="1" height="1" fill="#e0e010"/><rect x="224" y="250" width="1" height="1" fill="#c8c810"/><rect x="158" y="307" width="1" height="1" fill="#f0f030"/><rect x="320" y="250" width="1" height="1" fill="#e0e010"/><rect x="316" y="284" width="1" height="1" fill="#f0f030"/><rect x="209" y="273" width="1" height="1" fill="#c8c810"/><rect x="140" y="278" width="1" height="1" fill="#f0f070"/><rect x="278" y="305" width="1" height="1" fill="#f0f070"/><rect x="171" y="274" width="1" height="1" fill="#f0f030"/><rect x="122" y="350" width="1" height="1" fill="#f0f070"/><rect x="52" y="272" width="1" height="1" fill="#c8c810"/><rect x="78" y="326" width="1" height="1" fill="#c8c810"/><rect x="80" y="252" width="1" height="1" fill="#e0e010"/><rect x="183" y="279" width="1" height="1" fill="#f0f070"/><rect x="82" y="306" width="1" height="1" fill="#e0e010"/><rect x="219" y="285" width="1" height="1" fill="#f0f070"/><rect x="210" y="288" width="1" height="1" fill="#d0d000"/><rect x="279" y="313" width="1" height="1" fill="#e0e010"/><rect x="117" y="342" width="1" height="1" fill="#c8c810"/><rect x="106" y="327" width="1" height="1" fill="#e0e010"/><rect x="234" y="297" width="1" height="1" fill="#f0f030"/><rect x="209" y="281" width="1" height="1" fill="#d0d000"/><rect x="190" y="274" width="1" height="1" fill="#e0e010"/><rect x="97" y="331" width="1" height="1" fill="#f0f070"/><rect x="180" y="264" width="1" height="1" fill="#c8c810"/><rect x="85" y="287" width="1" height="1" fill="#f0f070"/><rect x="61" y="309" width="1" height="1" fill="#d0d000"/><rect x="44" y="257" width="1" height="1" fill="#c8c810"/><rect x="25" y="262" width="1" height="1" fill="#d0d000"/><rect x="237" y="244" width="1" height="1" fill="#f0f030"/><rect x="152" y="324" width="1" height="1" fill="#f0f030"/><rect x="162" y="262" width="1" height="1" fill="#f0f070"/><rect x="87" y="307" width="1" height="1" fill="#d0d000"/><rect x="267" y="265" width="1" height="1" fill="#e0e010"/><rect x="86" y="329" width="1" height="1" fill="#e0e010"/><rect x="111" y="287" width="1" height="1" fill="#d0d000"/><rect x="255" y="307" width="1" height="1" fill="#d0d000"/><rect x="191" y="279" width="1" height="1" fill="#d0d000"/><rect x="237" y="291" width="1" height="1" fill="#d0d000"/><rect x="128" y="319" width="1" height="1" fill="#f0f030"/><rect x="79" y="272" width="1" height="1" fill="#e0e010"/><rect x="7" y="326" width="1" height="1" fill="#f0f030"/><rect x="231" y="272" width="1" height="1" fill="#f0f070"/><rect x="212" y="271" width="1" height="1" fill="#d0d000"/><rect x="240" y="245" width="1" height="1" fill="#d0d000"/><rect x="16" y="286" width="1" height="1" fill="#e0e010"/><rect x="246" y="322" width="1" height="1" fill="#c8c810"/><rect x="42" y="289" width="1" height="1" fill="#e0e010"/><rect x="11" y="320" width="1" height="1" fill="#f0f070"/><rect x="163" y="283" width="1" height="1" fill="#d0d000"/><rect x="105" y="335" width="1" height="1" fill="#c8c810"/><rect x="281" y="252" width="1" height="1" fill="#c8c810"/><rect x="208" y="309" width="1" height="1" fill="#c8c810"/><rect x="329" y="250" width="1" height="1" fill="#c8c810"/><rect x="184" y="319" width="1" height="1" fill="#d0d000"/><rect x="51" y="270" width="1" height="1" fill="#f0f030"/><rect x="38" y="363" width="1" height="1" fill="#f0f070"/><rect x="86" y="305" width="1" height="1" fill="#d0d000"/><rect x="42" y="288" width="1" height="1" fill="#c8c810"/><rect x="8" y="323" width="1" height="1" fill="#f0f030"/><rect x="50" y="323" width="1" height="1" fill="#d0d000"/><rect x="93" y="277" width="1" height="1" fill="#f0f070"/><rect x="163" y="282" width="1" height="1" fill="#f0f070"/><rect x="88" y="258" width="1" height="1" fill="#c8c810"/><rect x="23" y="362" width="1" height="1" fill="#e0e010"/><rect x="105" y="262" width="1" height="1" fill="#f0f030"/><rect x="63" y="305" width="1" height="1" fill="#e0e010"/><rect x="334" y="234" width="1" height="1" fill="#f0f070"/><rect x="163" y="287" width="1" height="1" fill="#c8c810"/><rect x="185" y="304" width="1" height="1" fill="#d0d000"/><rect x="209" y="259" width="1" height="1" fill="#f0f030"/><rect x="315" y="292" width="1" height="1" fill="#d0d000"/><rect x="150" y="331" width="1" height="1" fill="#c8c810"/><rect x="243" y="250" width="1" height="1" fill="#f0f070"/><rect x="11" y="271" width="1" height="1" fill="#f0f030"/><rect x="42" y="258" width="1" height="1" fill="#d0d000"/><rect x="122" y="328" width="1" height="1" fill="#f0f070"/><rect x="105" y="306" width="1" height="1" fill="#e0e010"/><rect x="5" y="277" width="1" height="1" fill="#d0d000"/><rect x="321" y="221" width="1" height="1" fill="#f0f030"/><rect x="272" y="299" width="1" height="1" fill="#d0d000"/><rect x="135" y="331" width="1" height="1" fill="#c8c810"/><rect x="278" y="295" width="1" height="1" fill="#c8c810"/><rect x="36" y="365" width="1" height="1" fill="#f0f030"/><rect x="136" y="321" width="1" height="1" fill="#c8c810"/><rect x="85" y="350" width="1" height="1" fill="#d0d000"/><rect x="10" y="324" width="1" height="1" fill="#f0f030"/><rect x="78" y="294" width="1" height="1" fill="#f0f070"/><rect x="125" y="318" width="1" height="1" fill="#c8c810"/><rect x="272" y="261" width="1" height="1" fill="#c8c810"/><rect x="120" y="281" width="1" height="1" fill="#d0d000"/><rect x="113" y="328" width="1" height="1" fill="#e0e010"/><rect x="72" y="334" width="1" height="1" fill="#e0e010"/><rect x="184" y="307" width="1" height="1" fill="#e0e010"/><rect x="61" y="262" width="1" height="1" fill="#e0e010"/><rect x="50" y="290" width="1" height="1" fill="#d0d000"/><rect x="145" y="252" width="1" height="1" fill="#d0d000"/><rect x="169" y="284" width="1" height="1" fill="#f0f070"/><rect x="109" y="308" width="1" height="1" fill="#c8c810"/><rect x="319" y="237" width="1" height="1" fill="#e0e010"/><rect x="109" y="330" width="1" height="1" fill="#e0e010"/><rect x="38" y="369" width="1" height="1" fill="#f0f070"/><rect x="145" y="344" width="1" height="1" fill="#f0f030"/><rect x="75" y="297" width="1" height="1" fill="#f0f070"/><rect x="237" y="250" width="1" height="1" fill="#f0f030"/><rect x="93" y="324" width="1" height="1" fill="#f0f070"/><rect x="121" y="352" width="1" height="1" fill="#f0f070"/><rect x="51" y="324" width="1" height="1" fill="#f0f070"/><rect x="128" y="316" width="1" height="1" fill="#d0d000"/><rect x="73" y="320" width="1" height="1" fill="#d0d000"/><rect x="298" y="298" width="1" height="1" fill="#c8c810"/><rect x="170" y="299" width="1" height="1" fill="#f0f070"/><rect x="40" y="350" width="1" height="1" fill="#f0f030"/><rect x="232" y="275" width="1" height="1" fill="#d0d000"/><rect x="224" y="273" width="1" height="1" fill="#f0f070"/><rect x="130" y="275" width="1" height="1" fill="#c8c810"/><rect x="202" y="291" width="1" height="1" fill="#c8c810"/><rect x="174" y="246" width="1" height="1" fill="#f0f030"/><rect x="211" y="276" width="1" height="1" fill="#f0f030"/><rect x="200" y="294" width="1" height="1" fill="#f0f030"/><rect x="312" y="234" width="1" height="1" fill="#c8c810"/><rect x="333" y="275" width="1" height="1" fill="#c8c810"/><rect x="247" y="321" width="1" height="1" fill="#f0f030"/><rect x="136" y="337" width="1" height="1" fill="#e0e010"/><rect x="44" y="367" width="1" height="1" fill="#f0f070"/><rect x="166" y="268" width="1" height="1" fill="#f0f070"/><rect x="282" y="284" width="1" height="1" fill="#f0f030"/><rect x="278" y="298" width="1" height="1" fill="#c8c810"/><rect x="333" y="224" width="1" height="1" fill="#f0f030"/><rect x="239" y="257" width="1" height="1" fill="#c8c810"/><rect x="271" y="269" width="1" height="1" fill="#d0d000"/><rect x="216" y="239" width="1" height="1" fill="#e0e010"/><rect x="187" y="316" width="1" height="1" fill="#d0d000"/><rect x="165" y="269" width="1" height="1" fill="#e0e010"/><rect x="268" y="305" width="1" height="1" fill="#e0e010"/><rect x="185" y="329" width="1" height="1" fill="#f0f030"/><rect x="267" y="244" width="1" height="1" fill="#f0f070"/><rect x="35" y="254" width="1" height="1" fill="#d0d000"/><rect x="117" y="340" width="1" height="1" fill="#d0d000"/><rect x="131" y="336" width="1" height="1" fill="#c8c810"/><rect x="207" y="322" width="1" height="1" fill="#f0f070"/><rect x="26" y="373" width="1" height="1" fill="#d0d000"/><rect x="71" y="321" width="1" height="1" fill="#e0e010"/><rect x="225" y="274" width="1" height="1" fill="#e0e010"/><rect x="7" y="294" width="1" height="1" fill="#e0e010"/><rect x="107" y="318" width="1" height="1" fill="#f0f070"/><rect x="95" y="316" width="1" height="1" fill="#f0f030"/><rect x="233" y="250" width="1" height="1" fill="#e0e010"/><rect x="45" y="332" width="1" height="1" fill="#e0e010"/><rect x="157" y="261" width="1" height="1" fill="#c8c810"/><rect x="41" y="363" width="1" height="1" fill="#f0f030"/><rect x="205" y="268" width="1" height="1" fill="#e0e010"/><rect x="67" y="363" width="1" height="1" fill="#f0f030"/><rect x="232" y="302" width="1" height="1" fill="#c8c810"/><rect x="122" y="284" width="1" height="1" fill="#d0d000"/><rect x="138" y="266" width="1" height="1" fill="#f0f030"/><rect x="212" y="274" width="1" height="1" fill="#e0e010"/><rect x="275" y="264" width="1" height="1" fill="#c8c810"/><rect x="171" y="336" width="1" height="1" fill="#d0d000"/><rect x="117" y="324" width="1" height="1" fill="#e0e010"/><rect x="80" y="315" width="1" height="1" fill="#d0d000"/><rect x="97" y="344" width="1" height="1" fill="#d0d000"/><rect x="97" y="342" width="1" height="1" fill="#f0f070"/><rect x="227" y="276" width="1" height="1" fill="#c8c810"/><rect x="313" y="253" width="1" height="1" fill="#c8c810"/><rect x="202" y="278" width="1" height="1" fill="#f0f030"/><rect x="23" y="302" width="1" height="1" fill="#e0e010"/><rect x="96" y="300" width="1" height="1" fill="#c8c810"/><rect x="320" y="244" width="1" height="1" fill="#d0d000"/><rect x="226" y="256" width="1" height="1" fill="#d0d000"/><rect x="139" y="264" width="1" height="1" fill="#f0f070"/><rect x="300" y="245" width="1" height="1" fill="#d0d000"/><rect x="116" y="336" width="1" height="1" fill="#f0f070"/><rect x="285" y="278" width="1" height="1" fill="#f0f070"/><rect x="35" y="359" width="1" height="1" fill="#f0f030"/><rect x="31" y="294" width="1" height="1" fill="#e0e010"/><rect x="127" y="324" width="1" height="1" fill="#f0f070"/><rect x="225" y="265" width="1" height="1" fill="#f0f070"/><rect x="213" y="278" width="1" height="1" fill="#d0d000"/><rect x="122" y="299" width="1" height="1" fill="#f0f070"/><rect x="107" y="322" width="1" height="1" fill="#c8c810"/><rect x="204" y="330" width="1" height="1" fill="#c8c810"/><rect x="327" y="297" width="1" height="1" fill="#f0f030"/><rect x="278" y="285" width="1" height="1" fill="#c8c810"/><rect x="334" y="224" width="1" height="1" fill="#d0d000"/><rect x="136" y="316" width="1" height="1" fill="#e0e010"/><rect x="75" y="361" width="1" height="1" fill="#c8c810"/><rect x="72" y="292" width="1" height="1" fill="#f0f030"/><rect x="50" y="296" width="1" height="1" fill="#d0d000"/><rect x="218" y="293" width="1" height="1" fill="#c8c810"/><rect x="249" y="257" width="1" height="1" fill="#d0d000"/><rect x="245" y="303" width="1" height="1" fill="#e0e010"/><rect x="42" y="305" width="1" height="1" fill="#d0d000"/><rect x="7" y="362" width="1" height="1" fill="#e0e010"/><rect x="119" y="307" width="1" height="1" fill="#f0f070"/><rect x="180" y="252" width="1" height="1" fill="#c8c810"/><rect x="265" y="257" width="1" height="1" fill="#c8c810"/><rect x="43" y="317" width="1" height="1" fill="#f0f070"/><rect x="45" y="260" width="1" height="1" fill="#d0d000"/><rect x="173" y="272" width="1" height="1" fill="#f0f070"/><rect x="261" y="254" width="1" height="1" fill="#f0f070"/><rect x="20" y="277" width="1" height="1" fill="#f0f070"/><rect x="152" y="304" width="1" height="1" fill="#f0f070"/><rect x="155" y="331" width="1" height="1" fill="#d0d000"/><rect x="37" y="353" width="1" height="1" fill="#e0e010"/><rect x="54" y="363" width="1" height="1" fill="#e0e010"/><rect x="177" y="282" width="1" height="1" fill="#e0e010"/><rect x="206" y="319" width="1" height="1" fill="#f0f070"/><rect x="53" y="345" width="1" height="1" fill="#c8c810"/><rect x="247" y="297" width="1" height="1" fill="#e0e010"/><rect x="54" y="311" width="1" height="1" fill="#f0f030"/><rect x="12" y="263" width="1" height="1" fill="#f0f070"/><rect x="102" y="353" width="1" height="1" fill="#f0f030"/><rect x="216" y="315" width="1" height="1" fill="#c8c810"/><rect x="17" y="302" width="1" height="1" fill="#f0f070"/><rect x="28" y="282" width="1" height="1" fill="#e0e010"/><rect x="39" y="360" width="1" height="1" fill="#c8c810"/><rect x="111" y="303" width="1" height="1" fill="#f0f030"/><rect x="220" y="318" width="1" height="1" fill="#f0f030"/><rect x="317" y="267" width="1" height="1" fill="#f0f070"/><rect x="248" y="257" width="1" height="1" fill="#d0d000"/><rect x="124" y="295" width="1" height="1" fill="#d0d000"/><rect x="161" y="282" width="1" height="1" fill="#d0d000"/><rect x="145" y="295" width="1" height="1" fill="#f0f070"/><rect x="19" y="356" width="1" height="1" fill="#f0f030"/><rect x="23" y="316" width="1" height="1" fill="#e0e010"/><rect x="184" y="279" width="1" height="1" fill="#e0e010"/><rect x="76" y="263" width="1" height="1" fill="#f0f030"/><rect x="126" y="284" width="1" height="1" fill="#f0f070"/><rect x="163" y="269" width="1" height="1" fill="#f0f030"/><rect x="137" y="346" width="1" height="1" fill="#f0f030"/><rect x="4" y="327" width="1" height="1" fill="#f0f030"/><rect x="322" y="249" width="1" height="1" fill="#f0f030"/><rect x="125" y="282" width="1" height="1" fill="#e0e010"/><rect x="205" y="292" width="1" height="1" fill="#e0e010"/><rect x="107" y="304" width="1" height="1" fill="#c8c810"/><rect x="174" y="317" width="1" height="1" fill="#f0f030"/><rect x="20" y="261" width="1" height="1" fill="#f0f030"/><rect x="86" y="282" width="1" height="1" fill="#d0d000"/><rect x="267" y="268" width="1" height="1" fill="#f0f070"/><rect x="136" y="280" width="1" height="1" fill="#f0f030"/><rect x="228" y="241" width="1" height="1" fill="#c8c810"/><rect x="330" y="283" width="1" height="1" fill="#e0e010"/><rect x="108" y="337" width="1" height="1" fill="#d0d000"/><rect x="256" y="237" width="1" height="1" fill="#e0e010"/><rect x="186" y="331" width="1" height="1" fill="#d0d000"/><rect x="215" y="234" width="1" height="1" fill="#f0f030"/><rect x="313" y="283" width="1" height="1" fill="#f0f070"/><rect x="4" y="347" width="1" height="1" fill="#e0e010"/><rect x="141" y="317" width="1" height="1" fill="#e0e010"/><rect x="262" y="270" width="1" height="1" fill="#c8c810"/><rect x="128" y="297" width="1" height="1" fill="#e0e010"/><rect x="147" y="262" width="1" height="1" fill="#d0d000"/><rect x="109" y="328" width="1" height="1" fill="#f0f070"/><rect x="26" y="264" width="1" height="1" fill="#f0f070"/><rect x="280" y="286" width="1" height="1" fill="#f0f030"/><rect x="40" y="263" width="1" height="1" fill="#e0e010"/><rect x="105" y="351" width="1" height="1" fill="#c8c810"/><rect x="189" y="329" width="1" height="1" fill="#f0f030"/><rect x="72" y="297" width="1" height="1" fill="#f0f070"/><rect x="181" y="323" width="1" height="1" fill="#f0f070"/><rect x="43" y="354" width="1" height="1" fill="#d0d000"/><rect x="159" y="251" width="1" height="1" fill="#d0d000"/><rect x="146" y="288" width="1" height="1" fill="#f0f070"/><rect x="227" y="321" width="1" height="1" fill="#f0f030"/><rect x="166" y="312" width="1" height="1" fill="#e0e010"/><rect x="131" y="329" width="1" height="1" fill="#f0f070"/><rect x="37" y="339" width="1" height="1" fill="#f0f030"/><rect x="57" y="317" width="1" height="1" fill="#f0f070"/><rect x="69" y="290" width="1" height="1" fill="#c8c810"/><rect x="57" y="290" width="1" height="1" fill="#f0f030"/><rect x="199" y="286" width="1" height="1" fill="#d0d000"/><rect x="131" y="309" width="1" height="1" fill="#e0e010"/><rect x="282" y="258" width="1" height="1" fill="#f0f070"/><rect x="162" y="342" width="1" height="1" fill="#e0e010"/><rect x="111" y="324" width="1" height="1" fill="#c8c810"/><rect x="80" y="280" width="1" height="1" fill="#f0f030"/><rect x="245" y="285" width="1" height="1" fill="#f0f030"/><rect x="88" y="260" width="1" height="1" fill="#c8c810"/><rect x="277" y="261" width="1" height="1" fill="#c8c810"/><rect x="146" y="311" width="1" height="1" fill="#c8c810"/><rect x="188" y="335" width="1" height="1" fill="#d0d000"/><rect x="305" y="261" width="1" height="1" fill="#f0f030"/><rect x="79" y="334" width="1" height="1" fill="#f0f030"/><rect x="36" y="286" width="1" height="1" fill="#c8c810"/><rect x="284" y="229" width="1" height="1" fill="#c8c810"/><rect x="191" y="292" width="1" height="1" fill="#d0d000"/><rect x="113" y="268" width="1" height="1" fill="#f0f030"/><rect x="319" y="282" width="1" height="1" fill="#c8c810"/><rect x="35" y="345" width="1" height="1" fill="#d0d000"/><rect x="75" y="274" width="1" height="1" fill="#f0f030"/><rect x="180" y="301" width="1" height="1" fill="#d0d000"/><rect x="42" y="341" width="1" height="1" fill="#f0f070"/><rect x="196" y="325" width="1" height="1" fill="#f0f030"/><rect x="310" y="279" width="1" height="1" fill="#f0f070"/><rect x="85" y="255" width="1" height="1" fill="#e0e010"/><rect x="181" y="265" width="1" height="1" fill="#e0e010"/><rect x="100" y="280" width="1" height="1" fill="#c8c810"/><rect x="46" y="307" width="1" height="1" fill="#e0e010"/><rect x="93" y="283" width="1" height="1" fill="#f0f030"/><rect x="94" y="307" width="1" height="1" fill="#f0f030"/><rect x="293" y="238" width="1" height="1" fill="#f0f030"/><rect x="287" y="279" width="1" height="1" fill="#f0f070"/><rect x="246" y="282" width="1" height="1" fill="#f0f070"/><rect x="222" y="321" width="1" height="1" fill="#f0f070"/><rect x="314" y="251" width="1" height="1" fill="#d0d000"/><rect x="80" y="301" width="1" height="1" fill="#f0f030"/><rect x="125" y="325" width="1" height="1" fill="#d0d000"/><rect x="316" y="262" width="1" height="1" fill="#e0e010"/><rect x="118" y="276" width="1" height="1" fill="#f0f030"/><rect x="318" y="230" width="1" height="1" fill="#f0f030"/><rect x="221" y="239" width="1" height="1" fill="#c8c810"/><rect x="302" y="232" width="1" height="1" fill="#c8c810"/><rect x="42" y="368" width="1" height="1" fill="#f0f030"/><rect x="105" y="343" width="1" height="1" fill="#f0f030"/><rect x="22" y="333" width="1" height="1" fill="#e0e010"/><rect x="25" y="253" width="1" height="1" fill="#c8c810"/><rect x="192" y="335" width="1" height="1" fill="#c8c810"/><rect x="230" y="313" width="1" height="1" fill="#c8c810"/><rect x="177" y="260" width="1" height="1" fill="#c8c810"/><rect x="177" y="276" width="1" height="1" fill="#c8c810"/><rect x="168" y="264" width="1" height="1" fill="#f0f070"/><rect x="237" y="272" width="1" height="1" fill="#f0f070"/><rect x="164" y="254" width="1" height="1" fill="#f0f030"/><rect x="164" y="300" width="1" height="1" fill="#d0d000"/><rect x="102" y="288" width="1" height="1" fill="#f0f070"/><rect x="236" y="320" width="1" height="1" fill="#d0d000"/><rect x="327" y="294" width="1" height="1" fill="#e0e010"/><rect x="165" y="303" width="1" height="1" fill="#d0d000"/><rect x="230" y="290" width="1" height="1" fill="#d0d000"/><rect x="206" y="326" width="1" height="1" fill="#f0f070"/><rect x="31" y="313" width="1" height="1" fill="#d0d000"/><rect x="13" y="357" width="1" height="1" fill="#c8c810"/><rect x="231" y="282" width="1" height="1" fill="#d0d000"/><rect x="195" y="311" width="1" height="1" fill="#f0f030"/><rect x="266" y="316" width="1" height="1" fill="#d0d000"/><rect x="138" y="284" width="1" height="1" fill="#f0f070"/><rect x="117" y="254" width="1" height="1" fill="#e0e010"/><rect x="258" y="256" width="1" height="1" fill="#d0d000"/><rect x="177" y="275" width="1" height="1" fill="#f0f070"/><rect x="227" y="276" width="1" height="1" fill="#d0d000"/><rect x="80" y="348" width="1" height="1" fill="#c8c810"/><rect x="61" y="267" width="1" height="1" fill="#e0e010"/><rect x="86" y="304" width="1" height="1" fill="#f0f030"/><rect x="220" y="257" width="1" height="1" fill="#d0d000"/><rect x="176" y="267" width="1" height="1" fill="#c8c810"/><rect x="102" y="288" width="1" height="1" fill="#f0f070"/><rect x="244" y="294" width="1" height="1" fill="#e0e010"/><rect x="140" y="348" width="1" height="1" fill="#f0f030"/><rect x="125" y="288" width="1" height="1" fill="#c8c810"/><rect x="305" y="306" width="1" height="1" fill="#e0e010"/><rect x="47" y="343" width="1" height="1" fill="#c8c810"/><rect x="263" y="261" width="1" height="1" fill="#d0d000"/><rect x="128" y="281" width="1" height="1" fill="#f0f070"/><rect x="200" y="308" width="1" height="1" fill="#f0f030"/><rect x="160" y="327" width="1" height="1" fill="#e0e010"/><rect x="7" y="315" width="1" height="1" fill="#e0e010"/><rect x="129" y="259" width="1" height="1" fill="#d0d000"/><rect x="391" y="288" width="1" height="1" fill="#f0f070"/><rect x="395" y="238" width="1" height="1" fill="#f0f030"/><rect x="395" y="221" width="1" height="1" fill="#d0d000"/><rect x="381" y="288" width="1" height="1" fill="#f0f070"/><rect x="347" y="227" width="1" height="1" fill="#d0d000"/><rect x="378" y="283" width="1" height="1" fill="#d0d000"/><rect x="381" y="288" width="1" height="1" fill="#f0f070"/><rect x="364" y="244" width="1" height="1" fill="#e0e010"/><rect x="343" y="239" width="1" height="1" fill="#f0f030"/><rect x="395" y="215" width="1" height="1" fill="#c8c810"/><rect x="347" y="244" width="1" height="1" fill="#d0d000"/><rect x="338" y="242" width="1" height="1" fill="#f0f070"/><rect x="347" y="227" width="1" height="1" fill="#f0f030"/><rect x="369" y="256" width="1" height="1" fill="#e0e010"/><rect x="371" y="274" width="1" height="1" fill="#e0e010"/><rect x="369" y="288" width="1" height="1" fill="#f0f070"/><rect x="340" y="235" width="1" height="1" fill="#e0e010"/><rect x="340" y="242" width="1" height="1" fill="#e0e010"/><rect x="384" y="286" width="1" height="1" fill="#c8c810"/><rect x="367" y="227" width="1" height="1" fill="#c8c810"/><rect x="356" y="260" width="1" height="1" fill="#e0e010"/><rect x="354" y="277" width="1" height="1" fill="#f0f030"/><rect x="397" y="247" width="1" height="1" fill="#f0f070"/><rect x="374" y="280" width="1" height="1" fill="#f0f070"/><rect x="365" y="229" width="1" height="1" fill="#c8c810"/><rect x="395" y="289" width="1" height="1" fill="#f0f070"/><rect x="337" y="276" width="1" height="1" fill="#d0d000"/><rect x="361" y="219" width="1" height="1" fill="#d0d000"/><rect x="345" y="231" width="1" height="1" fill="#e0e010"/><rect x="382" y="229" width="1" height="1" fill="#c8c810"/><rect x="336" y="235" width="1" height="1" fill="#f0f070"/><rect x="386" y="251" width="1" height="1" fill="#f0f070"/><rect x="377" y="249" width="1" height="1" fill="#d0d000"/><rect x="347" y="218" width="1" height="1" fill="#d0d000"/><rect x="354" y="219" width="1" height="1" fill="#f0f030"/><rect x="352" y="264" width="1" height="1" fill="#d0d000"/><rect x="359" y="252" width="1" height="1" fill="#c8c810"/><rect x="375" y="238" width="1" height="1" fill="#c8c810"/><rect x="358" y="284" width="1" height="1" fill="#e0e010"/><rect x="372" y="246" width="1" height="1" fill="#f0f030"/><rect x="370" y="250" width="1" height="1" fill="#d0d000"/><rect x="356" y="286" width="1" height="1" fill="#e0e010"/><rect x="350" y="288" width="1" height="1" fill="#f0f030"/><rect x="390" y="282" width="1" height="1" fill="#c8c810"/><rect x="345" y="256" width="1" height="1" fill="#e0e010"/><rect x="398" y="233" width="1" height="1" fill="#c8c810"/><rect x="346" y="272" width="1" height="1" fill="#e0e010"/><rect x="350" y="261" width="1" height="1" fill="#f0f030"/><rect x="345" y="290" width="1" height="1" fill="#f0f070"/><rect x="353" y="224" width="1" height="1" fill="#c8c810"/><rect x="379" y="240" width="1" height="1" fill="#f0f030"/><rect x="371" y="253" width="1" height="1" fill="#d0d000"/><rect x="394" y="252" width="1" height="1" fill="#d0d000"/><rect x="359" y="215" width="1" height="1" fill="#c8c810"/><rect x="367" y="235" width="1" height="1" fill="#d0d000"/><rect x="372" y="263" width="1" height="1" fill="#d0d000"/><rect x="365" y="221" width="1" height="1" fill="#e0e010"/><rect x="367" y="252" width="1" height="1" fill="#f0f070"/><rect x="376" y="290" width="1" height="1" fill="#e0e010"/><rect x="353" y="250" width="1" height="1" fill="#f0f070"/><rect x="340" y="279" width="1" height="1" fill="#f0f030"/><rect x="350" y="280" width="1" height="1" fill="#d0d000"/><rect x="386" y="232" width="1" height="1" fill="#e0e010"/><rect x="393" y="251" width="1" height="1" fill="#f0f030"/><rect x="362" y="258" width="1" height="1" fill="#c8c810"/><rect x="396" y="250" width="1" height="1" fill="#c8c810"/><rect x="366" y="237" width="1" height="1" fill="#f0f070"/><rect x="389" y="251" width="1" height="1" fill="#c8c810"/><rect x="357" y="231" width="1" height="1" fill="#c8c810"/><rect x="349" y="281" width="1" height="1" fill="#c8c810"/><rect x="443" y="230" width="1" height="1" fill="#f0f070"/><rect x="452" y="218" width="1" height="1" fill="#e0e010"/><rect x="443" y="219" width="1" height="1" fill="#f0f030"/><rect x="444" y="223" width="1" height="1" fill="#e0e010"/><rect x="393" y="224" width="1" height="1" fill="#f0f030"/><rect x="403" y="201" width="1" height="1" fill="#d0d000"/><rect x="453" y="192" width="1" height="1" fill="#e0e010"/><rect x="420" y="205" width="1" height="1" fill="#f0f070"/><rect x="442" y="215" width="1" height="1" fill="#f0f030"/><rect x="452" y="228" width="1" height="1" fill="#f0f070"/><rect x="431" y="194" width="1" height="1" fill="#f0f030"/><rect x="432" y="195" width="1" height="1" fill="#c8c810"/><rect x="451" y="211" width="1" height="1" fill="#c8c810"/><rect x="144" y="117" width="1" height="1" fill="#d0d000"/><rect x="319" y="196" width="1" height="1" fill="#c8c810"/><rect x="452" y="177" width="1" height="1" fill="#d0d000"/><rect x="59" y="191" width="1" height="1" fill="#e0e010"/><rect x="29" y="211" width="1" height="1" fill="#d0d000"/><rect x="353" y="199" width="1" height="1" fill="#f0f070"/><rect x="401" y="170" width="1" height="1" fill="#e0e010"/><rect x="433" y="179" width="1" height="1" fill="#f0f070"/><rect x="227" y="144" width="1" height="1" fill="#c8c810"/><rect x="163" y="94" width="1" height="1" fill="#f0f070"/><rect x="76" y="201" width="1" height="1" fill="#e0e010"/><rect x="107" y="181" width="1" height="1" fill="#f0f030"/><rect x="356" y="187" width="1" height="1" fill="#e0e010"/><rect x="238" y="135" width="1" height="1" fill="#d0d000"/><rect x="127" y="117" width="1" height="1" fill="#d0d000"/><rect x="298" y="186" width="1" height="1" fill="#c8c810"/><rect x="433" y="137" width="1" height="1" fill="#f0f030"/><rect x="426" y="217" width="1" height="1" fill="#f0f070"/><rect x="135" y="222" width="1" height="1" fill="#d0d000"/><rect x="285" y="224" width="1" height="1" fill="#c8c810"/><rect x="356" y="137" width="1" height="1" fill="#f0f030"/><rect x="130" y="163" width="1" height="1" fill="#f0f070"/><rect x="225" y="96" width="1" height="1" fill="#f0f070"/><rect x="396" y="165" width="1" height="1" fill="#e0e010"/></g>
<polyline points="2.8,165.0 3.6,90.6 5.8,88.2 7.0,90.6 7.6,106.0 8.8,96.5 9.4,110.9 11.7,95.3 13.0,108.5 13.5,122.8 15.3,133.5 15.9,119.2 18.3,103.7 20.1,130.0 21.9,109.7 24.3,128.8 26.7,140.7 29.0,107.3 30.9,122.8 33.2,133.5 35.0,138.3 36.8,131.0 40.8,103.0 43.2,110.1 45.6,143.5 48.0,105.3 50.3,112.5 53.9,134.0 56.9,105.3 61.1,143.5 64.1,104.1 66.5,112.5 70.0,144.7 73.6,104.1 74.8,111.3 78.4,141.1 80.1,152.3 84.4,112.3 86.9,130.2 89.5,117.4 95.4,154.0 100.6,113.1 102.3,143.8 105.7,120.0 109.0,138.8 116.2,154.3 120.9,150.8 125.7,149.6 128.1,152.0 131.7,160.9 134.0,157.9 137.6,148.4 141.2,138.8 144.8,131.7 147.2,129.9 150.2,127.5 153.2,134.0 156.4,165.6 159.4,148.9 161.8,136.9 164.1,132.1 165.9,148.9 167.1,169.1 169.5,148.9 171.9,141.7 173.7,153.6 175.5,154.8 177.9,146.5 179.7,154.8 180.9,170.3 183.3,152.4 185.0,139.3 187.4,152.4 188.6,144.1 189.8,158.4 192.2,170.3 194.4,149.3 196.8,156.5 201.0,148.1 203.3,152.9 205.7,175.6 208.1,146.9 210.5,156.5 212.3,180.3 215.3,154.1 217.1,157.7 219.5,178.0 221.9,160.0 224.2,157.7 226.6,161.2 229.0,171.9 230.8,187.2 233.2,171.7 235.0,158.6 236.8,172.9 238.6,188.4 240.9,188.4 243.9,182.4 246.9,186.0 249.9,191.4 252.9,192.0 255.3,187.2 257.7,180.0 260.0,175.3 261.8,184.8 263.6,176.5 265.4,187.2 266.8,175.5 268.6,187.4 270.4,218.5 272.2,187.4 274.0,171.9 275.7,165.3 276.9,171.9 278.7,193.4 279.9,199.4 281.7,171.9 283.5,199.4 285.9,189.8 287.7,188.6 290.7,182.7 293.7,183.9 297.2,205.3 299.6,182.7 302.0,189.8 305.0,206.5 306.6,182.7 309.0,189.3 312.0,198.9 314.9,212.0 316.3,229.0 318.3,279.3 320.6,263.0 320.9,216.8 323.9,214.4 326.9,201.2 328.7,208.4 331.7,220.3 334.0,202.4 336.4,195.3 338.8,207.2 341.2,201.2 343.4,224.6 345.8,203.1 348.2,210.3 350.6,207.9 352.3,203.1 354.1,211.5 358.3,230.6 361.9,219.8 365.5,213.9 368.5,217.4 370.9,229.4 373.2,234.1 376.2,223.4 378.0,221.0 380.0,234.8 382.4,225.3 384.8,232.4 386.6,224.1 388.9,240.8 391.3,226.5 393.7,222.9 397.9,227.7 399.1,243.2 399.7,274.5 400.5,309.0 402.3,353.0 402.5,391.0 404.5,391.0 405.6,322.0 406.5,269.0 406.9,252.7 409.2,263.5 412.2,246.8 414.6,239.6 415.8,250.0 416.6,297.9 419.2,274.0 422.6,270.5 425.1,245.8 428.5,245.8 432.6,290.8 435.4,251.3 439.5,296.3 442.9,278.5 444.9,285.4 448.3,253.3 451.0,285.4 454.5,286.7 457.9,293.5" fill="none" stroke="#3ab6f0" stroke-width="1.3" stroke-linejoin="miter"/>
<rect x="0" y="0" width="460" height="1" fill="#000"/>
<rect x="0" y="0" width="2" height="392" fill="#000"/>
</svg>
<!-- axis labels -->
<div class="a" style="left:49px;top:172px;width:2px;height:1px;background:#999"></div><div class="a" style="left:511px;top:172px;width:2px;height:1px;background:#999"></div><div class="a" style="left:49px;top:241px;width:2px;height:1px;background:#999"></div><div class="a" style="left:511px;top:241px;width:2px;height:1px;background:#999"></div><div class="a" style="left:49px;top:310px;width:2px;height:1px;background:#999"></div><div class="a" style="left:511px;top:310px;width:2px;height:1px;background:#999"></div><div class="a" style="left:49px;top:379px;width:2px;height:1px;background:#999"></div><div class="a" style="left:511px;top:379px;width:2px;height:1px;background:#999"></div><div class="a" style="left:49px;top:448px;width:2px;height:1px;background:#999"></div><div class="a" style="left:511px;top:448px;width:2px;height:1px;background:#999"></div><div class="a" style="left:49px;top:517px;width:2px;height:1px;background:#999"></div><div class="a" style="left:511px;top:517px;width:2px;height:1px;background:#999"></div>
<div class="ax" style="left:53px;top:159px">MB/秒</div>
<div class="ax" style="left:495px;top:159px">ms</div>
<div class="ax" style="left:20px;top:166px;width:28px;text-align:right">150</div>
<div class="ax" style="left:20px;top:235px;width:28px;text-align:right">125</div>
<div class="ax" style="left:20px;top:304px;width:28px;text-align:right">100</div>
<div class="ax" style="left:20px;top:373px;width:28px;text-align:right">75</div>
<div class="ax" style="left:20px;top:442px;width:28px;text-align:right">50</div>
<div class="ax" style="left:20px;top:511px;width:28px;text-align:right">25</div>
<div class="ax" style="left:514px;top:166px">60</div>
<div class="ax" style="left:514px;top:235px">50</div>
<div class="ax" style="left:514px;top:304px">40</div>
<div class="ax" style="left:514px;top:373px">30</div>
<div class="ax" style="left:514px;top:442px">20</div>
<div class="ax" style="left:514px;top:511px">10</div>
<!-- right controls -->
<div class="btn" style="left:554px;top:151px;width:86px;height:28px"></div>
<div class="lbl" style="left:554px;top:158px;width:86px;text-align:center">开始</div>
<div class="sep" style="left:545px;top:192px;width:118px"></div>
<div class="a" style="left:550px;top:203px;width:13px;height:13px;border-radius:50%;border:1px solid #333;background:#fff"></div>
<div class="a" style="left:553.5px;top:206.5px;width:6px;height:6px;border-radius:50%;background:#222"></div>
<div class="lbl" style="left:566px;top:203px">读取</div>
<div class="a" style="left:550px;top:224px;width:13px;height:13px;border-radius:50%;border:1px solid #333;background:#fff"></div>
<div class="lbl" style="left:566px;top:224px">写入</div>
<div class="sep" style="left:545px;top:243px;width:118px"></div>
<div class="cb" style="top:256px"></div>
<div class="lbl" style="left:566px;top:256px">快捷行程</div>
<div class="a" style="left:550px;top:279px;width:72px;height:26px;border:1px solid #c8c8c8;background:#fff"></div>
<div class="a" style="left:554px;top:283px;font-size:13px;line-height:15px;color:#8a8a8a">40</div>
<div class="a" style="left:604px;top:280px;width:17px;height:24px;border-left:1px solid #d4d4d4;background:#f0f0f0"></div>
<div class="a" style="left:605px;top:292px;width:16px;height:1px;background:#d4d4d4"></div>
<svg class="a" style="left:609px;top:283px" width="8" height="18" viewBox="0 0 8 18"><path d="M1 5L4 2L7 5z M1 12L4 15L7 12z" fill="#666"/></svg>
<div class="lbl" style="left:636px;top:286px;font-size:13px">gB</div>
<div class="cb" style="top:320px"></div>
<svg class="a" style="left:551px;top:321px" width="11" height="11" viewBox="0 0 11 11"><path d="M1.8 5.2L4.3 8.2L9.3 1.8" stroke="#111" stroke-width="2.3" fill="none"/></svg>
<div class="lbl" style="left:566px;top:320px">传输速率</div>
<div class="sep" style="left:545px;top:337px;width:118px"></div>
<div class="lbl" style="left:550px;top:343px">最低</div>
<div class="val" style="top:360px">0.5 MB/秒</div>
<div class="lbl" style="left:550px;top:386px">最高</div>
<div class="val" style="top:403px">118.2 MB/秒</div>
<div class="lbl" style="left:550px;top:426px">平均</div>
<div class="val" style="top:443px">84.5 MB/秒</div>
<div class="sep" style="left:545px;top:473px;width:118px"></div>
<div class="cb" style="top:484px"></div>
<svg class="a" style="left:551px;top:485px" width="11" height="11" viewBox="0 0 11 11"><path d="M1.8 5.2L4.3 8.2L9.3 1.8" stroke="#111" stroke-width="2.3" fill="none"/></svg>
<div class="lbl" style="left:566px;top:483px">存取时间</div>
<div class="val" style="top:501px;height:19px;line-height:16px;color:#f4f430">19.3 ms</div>
<div class="cb" style="top:528px"></div>
<svg class="a" style="left:551px;top:529px" width="11" height="11" viewBox="0 0 11 11"><path d="M1.8 5.2L4.3 8.2L9.3 1.8" stroke="#111" stroke-width="2.3" fill="none"/></svg>
<div class="lbl" style="left:566px;top:527px">突发传输速率</div>
<div class="val" style="top:545px;height:17px;color:#fff;line-height:15px;overflow:hidden">68.8 MB/秒</div>
<!-- watermark -->
<div class="a" style="left:558px;top:548px;width:122px;height:30px;opacity:0.85">
<div class="a" style="left:2px;top:1px;font-weight:bold;font-style:italic;font-size:21px;line-height:22px;color:#2a58a8;letter-spacing:-2px;text-shadow:0 0 1px #fff,1px 1px 0 #fff">CE</div>
<div class="a" style="left:3px;top:18px;width:26px;height:4px;background:#3a68b8"></div>
<div class="a" style="left:36px;top:4px;font-family:'Liberation Serif',serif;font-weight:bold;font-size:19px;line-height:20px;color:#4a7cc8;letter-spacing:1px;text-shadow:1px 1px 0 #fff,-1px 0 0 #e8f0ff">消费电子</div>
</div>
</body></html>
